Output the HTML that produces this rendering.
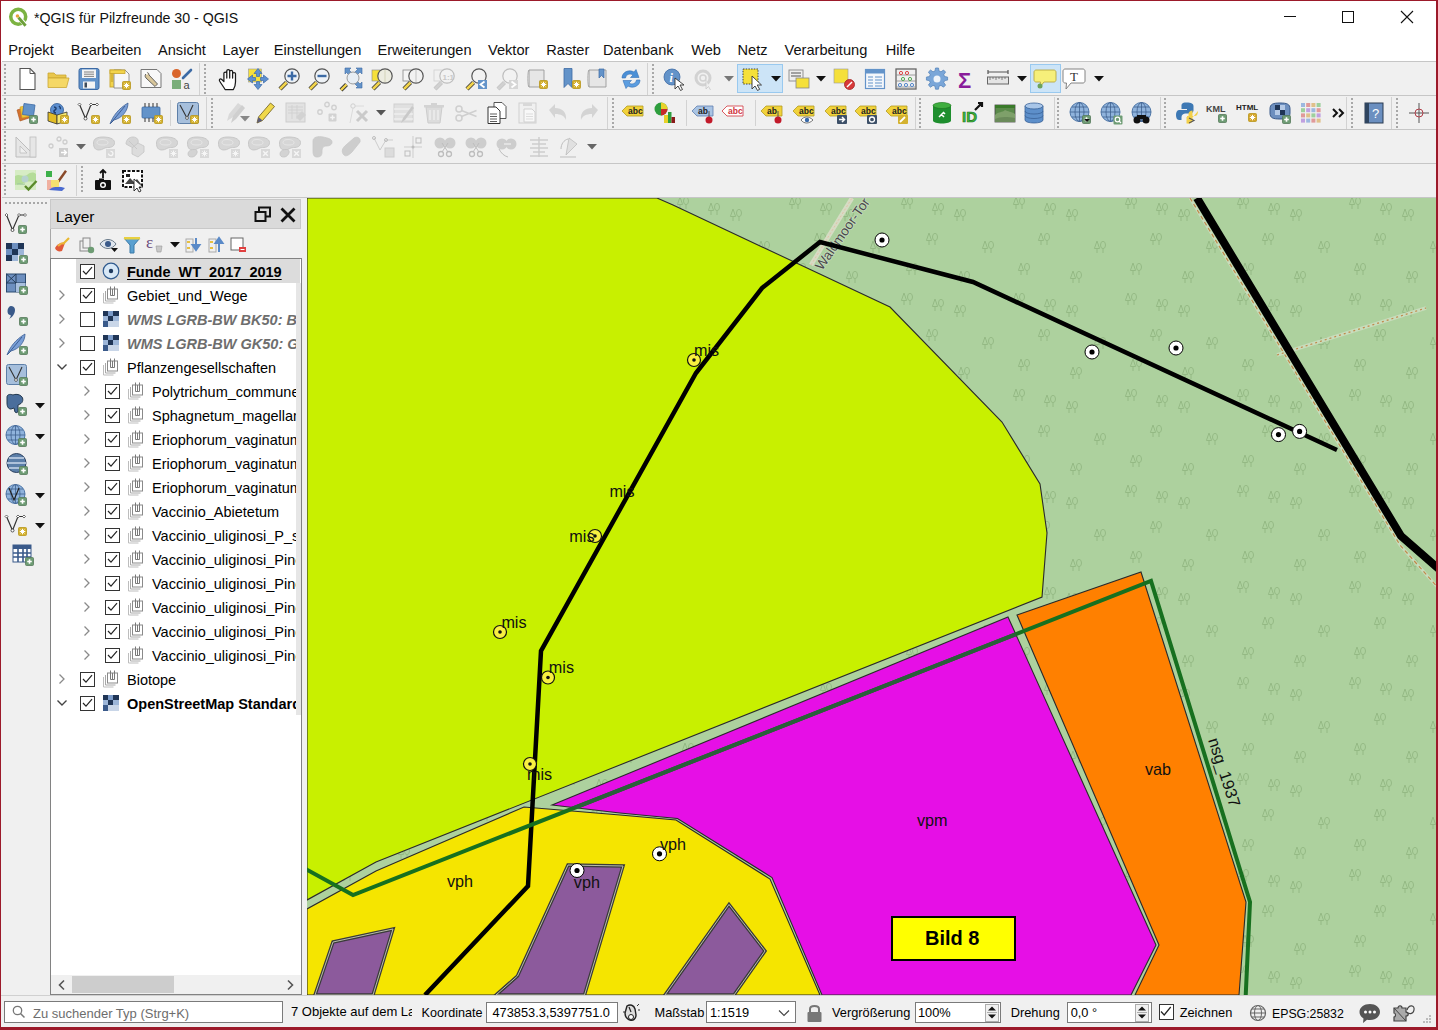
<!DOCTYPE html><html><head><meta charset="utf-8"><style>
*{box-sizing:border-box;margin:0;padding:0}
html,body{width:1438px;height:1030px;overflow:hidden;background:#f0f0f0;font-family:"Liberation Sans",sans-serif;color:#000}
.a{position:absolute}
.t{position:absolute;white-space:pre;line-height:1}
svg{position:absolute;overflow:visible}
.hd{position:absolute;width:2px;background-image:linear-gradient(#a8a8a8 50%,transparent 50%);background-size:2px 4px}
.hh{position:absolute;height:2px;background-image:linear-gradient(90deg,#a8a8a8 50%,transparent 50%);background-size:4px 2px}
.vs{position:absolute;width:1px;background:#d2d2d2}
</style></head><body><div class="a" style="left:0;top:0;width:1438px;height:62px;background:#fff"></div>
<svg style="left:8px;top:7px" width="22" height="21" viewBox="0 0 20 19"><circle cx="9.3" cy="8.8" r="6.8" fill="none" stroke="#7cb342" stroke-width="3.2"/><path d="M8.5,8l8,9" stroke="#fff" stroke-width="4"/><path d="M9.5,9.5l6.5,7.5" stroke="#6d9f3a" stroke-width="2.6"/><circle cx="8.6" cy="8.2" r="1.6" fill="#e8a23a"/></svg>
<div class="t" style="left:34px;top:11.28px;font-size:14.2px;color:#111;font-weight:400;font-style:normal;">*QGIS für Pilzfreunde 30 - QGIS</div>
<div class="a" style="left:1284px;top:16px;width:12px;height:1px;background:#111"></div>
<div class="a" style="left:1342px;top:11px;width:12px;height:12px;border:1px solid #111"></div>
<svg style="left:1401px;top:11px" width="12" height="12" viewBox="0 0 12 12"><path d="M0,0L12,12M12,0L0,12" stroke="#111" stroke-width="1.1"/></svg>
<div class="t" style="left:8.3px;top:43.24px;font-size:14.6px;color:#111;font-weight:400;font-style:normal;">Projekt</div>
<div class="t" style="left:70.8px;top:43.24px;font-size:14.6px;color:#111;font-weight:400;font-style:normal;">Bearbeiten</div>
<div class="t" style="left:158px;top:43.24px;font-size:14.6px;color:#111;font-weight:400;font-style:normal;">Ansicht</div>
<div class="t" style="left:222.5px;top:43.24px;font-size:14.6px;color:#111;font-weight:400;font-style:normal;">Layer</div>
<div class="t" style="left:273.7px;top:43.24px;font-size:14.6px;color:#111;font-weight:400;font-style:normal;">Einstellungen</div>
<div class="t" style="left:377.5px;top:43.24px;font-size:14.6px;color:#111;font-weight:400;font-style:normal;">Erweiterungen</div>
<div class="t" style="left:488px;top:43.24px;font-size:14.6px;color:#111;font-weight:400;font-style:normal;">Vektor</div>
<div class="t" style="left:546.3px;top:43.24px;font-size:14.6px;color:#111;font-weight:400;font-style:normal;">Raster</div>
<div class="t" style="left:603px;top:43.24px;font-size:14.6px;color:#111;font-weight:400;font-style:normal;">Datenbank</div>
<div class="t" style="left:691.2px;top:43.24px;font-size:14.6px;color:#111;font-weight:400;font-style:normal;">Web</div>
<div class="t" style="left:737.5px;top:43.24px;font-size:14.6px;color:#111;font-weight:400;font-style:normal;">Netz</div>
<div class="t" style="left:784.5px;top:43.24px;font-size:14.6px;color:#111;font-weight:400;font-style:normal;">Verarbeitung</div>
<div class="t" style="left:885.8px;top:43.24px;font-size:14.6px;color:#111;font-weight:400;font-style:normal;">Hilfe</div>
<div class="a" style="left:2px;top:61px;width:1434px;height:1px;background:#c6c6c6"></div>
<div class="a" style="left:2px;top:95px;width:1434px;height:1px;background:#c6c6c6"></div>
<div class="a" style="left:2px;top:129px;width:1434px;height:1px;background:#c6c6c6"></div>
<div class="a" style="left:2px;top:163px;width:1434px;height:1px;background:#c6c6c6"></div>
<div class="a" style="left:2px;top:197px;width:1434px;height:1px;background:#c6c6c6"></div>
<div class="hd" style="left:4px;top:64px;height:30px"></div>
<div class="hd" style="left:4px;top:98px;height:30px"></div>
<div class="hd" style="left:4px;top:131px;height:30px"></div>
<div class="hd" style="left:4px;top:165px;height:30px"></div>
<svg style="left:15.0px;top:67.0px" width="24" height="24" viewBox="0 0 24 24"><path d="M5,1.5h10l5,5v16h-15z" fill="#fff" stroke="#555" stroke-width="1.1"/><path d="M15,1.5v5h5" fill="none" stroke="#555" stroke-width="1"/></svg>
<svg style="left:45.7px;top:67.0px" width="24" height="24" viewBox="0 0 24 24"><path d="M2,6h6l2,2h10v3h-18z" fill="#e9c74d" stroke="#c9a633" stroke-width="0.8"/><path d="M2,11h21l-2.5,9.5h-18.5z" fill="#f5d866" stroke="#c9a633" stroke-width="0.8"/></svg>
<svg style="left:77.0px;top:67.0px" width="24" height="24" viewBox="0 0 24 24"><rect x="2" y="1.5" width="20" height="21" rx="2" fill="#6393c9" stroke="#3c6aa5" stroke-width="1"/><rect x="5" y="2.5" width="14" height="8.5" fill="#f4f4f4"/><path d="M7,5h10M7,7.2h10M7,9.4h10" stroke="#505050" stroke-width="0.7"/><rect x="6" y="14.5" width="12" height="7" fill="#f4f4f4"/><rect x="7.5" y="15.5" width="2.5" height="5" fill="#3c4a5a"/></svg>
<svg style="left:108.0px;top:67.0px" width="24" height="24" viewBox="0 0 24 24"><rect x="2" y="3" width="11" height="17" fill="#f2d44c" stroke="#c8a52a" stroke-width="0.9"/><path d="M3,6h2M3,8h2M3,10h2M3,12h2M3,14h2" stroke="#b08a1a" stroke-width="0.8"/><path d="M6,3h11l4,4v14h-15z" fill="#f7f7f7" stroke="#888" stroke-width="0.9"/><rect x="2" y="3" width="15" height="3.5" fill="#f2d44c" stroke="#c8a52a" stroke-width="0.8"/><rect x="14.5" y="14.5" width="8" height="8" rx="1" fill="#d4b22f" stroke="#b8961c" stroke-width="0.8"/><path d="M18.5,15.8v5.5M15.8,18.5h5.5M16.6,16.6l3.8,3.8M20.4,16.6l-3.8,3.8" stroke="#fff" stroke-width="1"/></svg>
<svg style="left:139.0px;top:67.0px" width="24" height="24" viewBox="0 0 24 24"><path d="M2,2.5h16l4,4v14h-20z" fill="#f8f8f8" stroke="#777" stroke-width="1"/><path d="M8,6c-2,1-2.5,3.5-1,5l9,8.5 2.5-2.5-8.5-9c-0.2-2-1-2.5-2-2z" fill="#d9c79b" stroke="#555" stroke-width="0.9"/><path d="M6,5l2.5,2.5" stroke="#fff" stroke-width="1.6"/></svg>
<svg style="left:170.0px;top:67.0px" width="24" height="24" viewBox="0 0 24 24"><circle cx="6.5" cy="6.5" r="4.5" fill="#d9652b"/><path d="M13,11l8,-8" stroke="#3c6aa5" stroke-width="2.6" stroke-linecap="round"/><rect x="2" y="13" width="9" height="9" fill="#7aae7a"/><text x="13.5" y="21.5" font-family="Liberation Sans" font-size="11" fill="#444">a</text></svg>
<div class="vs" style="left:199px;top:63px;height:32px"></div>
<div class="hd" style="left:204px;top:64px;height:30px"></div>
<svg style="left:215.0px;top:67.0px" width="24" height="24" viewBox="0 0 24 24"><g transform="translate(2.6,0)"><path d="M7.5,22.5C6,20 3.5,16.5 2,14C1.2,12.7 2.6,11.2 3.9,12.2L6.3,14.5V6.2C6.3,4.6 9.2,4.6 9.2,6.2V11V3.8C9.2,2.2 12.1,2.2 12.1,3.8V11V4.6C12.1,3 15,3 15,4.6V11V6.8C15,5.2 17.9,5.2 17.9,6.8V15C17.9,18.5 17,20.5 15.8,22.5Z" fill="#fff" stroke="#1a1a1a" stroke-width="1.25" stroke-linejoin="round"/></g></svg>
<svg style="left:246.0px;top:67.0px" width="24" height="24" viewBox="0 0 24 24"><rect x="2.5" y="2" width="13" height="13" fill="#f5e03a" stroke="#999" stroke-width="0.6"/><path d="M12,1.5l4,5h-2.5v3h-3v-3h-2.5z" fill="#5d8fcf" stroke="#3a6aa8" stroke-width="0.7"/><path d="M12,22.5l4-5h-2.5v-3h-3v3h-2.5z" fill="#5d8fcf" stroke="#3a6aa8" stroke-width="0.7"/><path d="M1.5,12l5-4v2.5h3v3h-3v2.5z" fill="#5d8fcf" stroke="#3a6aa8" stroke-width="0.7"/><path d="M22.5,12l-5-4v2.5h-3v3h3v2.5z" fill="#5d8fcf" stroke="#3a6aa8" stroke-width="0.7"/></svg>
<svg style="left:276.5px;top:67.0px" width="24" height="24" viewBox="0 0 24 24"><path d="M3,22 l6.5,-6.5" stroke="#333" stroke-width="4.2"/><path d="M3,22 l6.5,-6.5" stroke="#f2d44c" stroke-width="2.6"/><circle cx="15" cy="9" r="7.2" fill="#eef2f6" stroke="#555" stroke-width="1.2"/><path d="M15,4.5v9M10.5,9h9" stroke="#3c6aa5" stroke-width="2.4"/></svg>
<svg style="left:307.4px;top:67.0px" width="24" height="24" viewBox="0 0 24 24"><path d="M3,22 l6.5,-6.5" stroke="#333" stroke-width="4.2"/><path d="M3,22 l6.5,-6.5" stroke="#f2d44c" stroke-width="2.6"/><circle cx="15" cy="9" r="7.2" fill="#eef2f6" stroke="#555" stroke-width="1.2"/><path d="M10.5,9h9" stroke="#3c6aa5" stroke-width="2.4"/></svg>
<svg style="left:339.0px;top:67.0px" width="24" height="24" viewBox="0 0 24 24"><path d="M6,1h6l-2,2 3,3-2.5,2.5-3-3-1.5,1.5zM23,1v6l-2,-2-3,3-2.5,-2.5 3,-3-1.5,-1.5zM23,21v-6l-2,2-3,-3-2.5,2.5 3,3-1.5,1.5z" fill="#6393c9" stroke="#3c6aa5" stroke-width="0.6"/><circle cx="14" cy="11" r="6" fill="#e8eef4" stroke="#888" stroke-width="0.8"/><path d="M2,23 l5.5,-5.5" stroke="#333" stroke-width="4"/><path d="M2,23 l5.5,-5.5" stroke="#f2d44c" stroke-width="2.4"/></svg>
<svg style="left:370.0px;top:67.0px" width="24" height="24" viewBox="0 0 24 24"><rect x="2" y="3" width="8" height="11" fill="#f5e03a" stroke="#888" stroke-width="0.6"/><path d="M3,22 l6.5,-6.5" stroke="#333" stroke-width="4.2"/><path d="M3,22 l6.5,-6.5" stroke="#f2d44c" stroke-width="2.6"/><circle cx="15" cy="9" r="7.2" fill="#ecece0" stroke="#555" stroke-width="1.2"/><path d="M15,3v12" stroke="#d8d8c0" stroke-width="1.2"/></svg>
<svg style="left:401.0px;top:67.0px" width="24" height="24" viewBox="0 0 24 24"><rect x="2" y="3" width="9" height="11" fill="#f4f4f4" stroke="#888" stroke-width="0.8"/><path d="M3,22 l6.5,-6.5" stroke="#333" stroke-width="4.2"/><path d="M3,22 l6.5,-6.5" stroke="#f2d44c" stroke-width="2.6"/><circle cx="15" cy="9" r="7.2" fill="#f2f2f2" stroke="#555" stroke-width="1.2"/><path d="M15,3v12" stroke="#ccc" stroke-width="1.2"/></svg>
<svg style="left:432.0px;top:67.0px" width="24" height="24" viewBox="0 0 24 24"><rect x="2" y="3" width="9" height="11" fill="#f0f0f0" stroke="#d0d0d0" stroke-width="0.8"/><path d="M3,22 l6.5,-6.5" stroke="#c4c4c4" stroke-width="4.2"/><path d="M3,22 l6.5,-6.5" stroke="#d0d0d0" stroke-width="2.6"/><circle cx="15" cy="9" r="7.2" fill="#f2f2f2" stroke="#bdbdbd" stroke-width="1.2"/><text x="10.5" y="12.5" font-family="Liberation Sans" font-weight="700" font-size="8" fill="#c8c8c8">1:1</text></svg>
<svg style="left:464.0px;top:67.0px" width="24" height="24" viewBox="0 0 24 24"><path d="M3,22 l6.5,-6.5" stroke="#333" stroke-width="4.2"/><path d="M3,22 l6.5,-6.5" stroke="#f2d44c" stroke-width="2.6"/><circle cx="15" cy="9" r="7.2" fill="#f2f2f2" stroke="#555" stroke-width="1.2"/><rect x="14" y="13" width="9" height="9" fill="#6393c9"/><path d="M20.5,14.5l-4,3 4,3" fill="none" stroke="#fff" stroke-width="1.8"/></svg>
<svg style="left:495.0px;top:67.0px" width="24" height="24" viewBox="0 0 24 24"><path d="M3,22 l6.5,-6.5" stroke="#c4c4c4" stroke-width="4.2"/><path d="M3,22 l6.5,-6.5" stroke="#d0d0d0" stroke-width="2.6"/><circle cx="15" cy="9" r="7.2" fill="#f2f2f2" stroke="#bdbdbd" stroke-width="1.2"/><rect x="14" y="13" width="9" height="9" fill="#d6d6d6"/><path d="M16.5,14.5l4,3-4,3" fill="none" stroke="#fff" stroke-width="1.8"/></svg>
<svg style="left:526.0px;top:67.0px" width="24" height="24" viewBox="0 0 24 24"><path d="M3,3h15v17h-15z" fill="#e6e6e6" stroke="#999" stroke-width="0.9"/><path d="M3,3c-1.5,0-1.5,17 0,17" fill="#ddd" stroke="#999" stroke-width="0.8"/><rect x="13.5" y="13.5" width="8" height="8" rx="1" fill="#d2ae2a" stroke="#b8961c" stroke-width="0.8"/><path d="M17.5,14.8v5.5M14.8,17.5h5.5M15.6,15.6l3.8,3.8M19.4,15.6l-3.8,3.8" stroke="#fff" stroke-width="1"/></svg>
<svg style="left:559.0px;top:67.0px" width="24" height="24" viewBox="0 0 24 24"><path d="M5,1.5h8v19l-4,-4-4,4z" fill="#6393c9" stroke="#3c6aa5" stroke-width="0.8"/><rect x="13.5" y="13.5" width="8" height="8" rx="1" fill="#d2ae2a" stroke="#b8961c" stroke-width="0.8"/><path d="M17.5,14.8v5.5M14.8,17.5h5.5M15.6,15.6l3.8,3.8M19.4,15.6l-3.8,3.8" stroke="#fff" stroke-width="1"/></svg>
<svg style="left:586.0px;top:67.0px" width="24" height="24" viewBox="0 0 24 24"><path d="M3,3h17v17h-17z" fill="#e6e6e6" stroke="#999" stroke-width="0.9"/><path d="M3,3c-1.5,0-1.5,17 0,17" fill="#ddd" stroke="#999" stroke-width="0.8"/><path d="M13,2h5v9l-2.5,-2.5-2.5,2.5z" fill="#6393c9" stroke="#3c6aa5" stroke-width="0.7"/></svg>
<svg style="left:618.5px;top:67.0px" width="24" height="24" viewBox="0 0 24 24"><path d="M3,11c0-6 7-9 12-6l2-2.5 3,8h-8.5l2.5-2.5c-3-2-7-0.5-7.5,3z" fill="#4a8fd6" stroke="#3570b5" stroke-width="0.6"/><path d="M21,13c0,6-7,9-12,6l-2,2.5-3-8h8.5l-2.5,2.5c3,2 7,0.5 7.5-3z" fill="#5b9de0" stroke="#3570b5" stroke-width="0.6"/></svg>
<div class="vs" style="left:647px;top:63px;height:32px"></div>
<div class="hd" style="left:652px;top:64px;height:30px"></div>
<div class="a" style="left:737px;top:64px;width:46px;height:29px;background:#cce4f7;border:1px solid #99c9ef"></div>
<div class="a" style="left:1030px;top:64px;width:31px;height:29px;background:#cce4f7;border:1px solid #99c9ef"></div>
<svg style="left:662.0px;top:67.0px" width="24" height="24" viewBox="0 0 24 24"><circle cx="10" cy="10" r="8" fill="#6393c9" stroke="#3c6aa5" stroke-width="0.8"/><text x="7.5" y="15" font-family="Liberation Serif" font-style="italic" font-weight="700" font-size="12" fill="#fff">i</text><path d="M13,11v11l3,-3 2.5,4.5 2,-1-2.5,-4.5h4z" fill="#fff" stroke="#333" stroke-width="0.9"/></svg>
<svg style="left:692.0px;top:67.0px" width="24" height="24" viewBox="0 0 24 24"><circle cx="11" cy="11" r="7" fill="none" stroke="#d2d2d2" stroke-width="3"/><circle cx="11" cy="11" r="3" fill="none" stroke="#d2d2d2" stroke-width="1.5"/><path d="M14,13v9l2.5,-2.5 2,3.5" fill="#eee" stroke="#ccc" stroke-width="0.9"/></svg>
<svg style="left:740.5px;top:67.0px" width="24" height="24" viewBox="0 0 24 24"><rect x="2" y="2" width="15" height="15" fill="#f5e03a" stroke="#333" stroke-width="0.9" stroke-dasharray="1.5,1.2"/><path d="M11,9v13l3,-3 2.5,4.5 2.2,-1.2-2.5,-4.3h4.3z" fill="#fff" stroke="#333" stroke-width="0.9"/></svg>
<svg style="left:787.0px;top:67.0px" width="24" height="24" viewBox="0 0 24 24"><rect x="2" y="3" width="14" height="11" fill="#eee" stroke="#888" stroke-width="0.9"/><path d="M4,6h10M4,9h10" stroke="#888" stroke-width="1.3"/><rect x="9" y="11" width="13" height="10" fill="#f5e03a" stroke="#888" stroke-width="0.8"/></svg>
<svg style="left:832.0px;top:67.0px" width="24" height="24" viewBox="0 0 24 24"><rect x="2" y="2" width="14" height="14" fill="#f5e03a" stroke="#999" stroke-width="0.6"/><circle cx="17.5" cy="17.5" r="5" fill="#d83a3a" stroke="#a02020" stroke-width="0.8"/><path d="M15,20l5,-5" stroke="#fff" stroke-width="1.5"/></svg>
<svg style="left:863.0px;top:67.0px" width="24" height="24" viewBox="0 0 24 24"><rect x="2.5" y="2.5" width="19" height="19" fill="#f4f7fb" stroke="#6393c9" stroke-width="1.2"/><rect x="2.5" y="2.5" width="19" height="4" fill="#6393c9"/><path d="M5,10h5M12,10h7M5,13h5M12,13h7M5,16h5M12,16h7M5,19h5M12,19h7" stroke="#6393c9" stroke-width="1.1"/></svg>
<svg style="left:894.0px;top:67.0px" width="24" height="24" viewBox="0 0 24 24"><rect x="2" y="2" width="20" height="20" fill="none" stroke="#666" stroke-width="1.3"/><path d="M2,8h20M2,14h20M2,20h20" stroke="#888" stroke-width="0.8"/><circle cx="7" cy="6" r="1.6" fill="none" stroke="#d44" stroke-width="1"/><circle cx="13" cy="6" r="1.6" fill="none" stroke="#d44" stroke-width="1"/><circle cx="9" cy="12" r="1.6" fill="none" stroke="#5a5" stroke-width="1"/><circle cx="16" cy="12" r="1.6" fill="none" stroke="#5a5" stroke-width="1"/><circle cx="6" cy="18" r="1.6" fill="none" stroke="#58c" stroke-width="1"/><circle cx="12" cy="18" r="1.6" fill="none" stroke="#58c" stroke-width="1"/><circle cx="18" cy="18" r="1.6" fill="none" stroke="#58c" stroke-width="1"/></svg>
<svg style="left:924.5px;top:67.0px" width="24" height="24" viewBox="0 0 24 24"><path d="M10.5,1h3l0.5,3 2,0.8 2.5-1.8 2.1,2.1-1.8,2.5 0.8,2 3,0.5v3l-3,0.5-0.8,2 1.8,2.5-2.1,2.1-2.5-1.8-2,0.8-0.5,3h-3l-0.5-3-2-0.8-2.5,1.8-2.1-2.1 1.8-2.5-0.8-2-3-0.5v-3l3-0.5 0.8-2-1.8-2.5 2.1-2.1 2.5,1.8 2-0.8z" fill="#7aa6d8" stroke="#4f7fb8" stroke-width="0.7"/><circle cx="12" cy="12" r="3.5" fill="#eef3f9"/></svg>
<svg style="left:955.0px;top:67.0px" width="24" height="24" viewBox="0 0 24 24"><text x="3" y="21" font-family="Liberation Sans" font-weight="700" font-size="22" fill="#8a1c9a">Σ</text></svg>
<svg style="left:986.0px;top:67.0px" width="24" height="24" viewBox="0 0 24 24"><rect x="1.5" y="10" width="21" height="7" fill="#e4e4e4" stroke="#666" stroke-width="1"/><path d="M4,10v3M7,10v2M10,10v3M13,10v2M16,10v3M19,10v2" stroke="#666" stroke-width="0.8"/><path d="M2,5h20M2,3v4M22,3v4" stroke="#555" stroke-width="1.2"/></svg>
<svg style="left:1032.5px;top:67.0px" width="24" height="24" viewBox="0 0 24 24"><path d="M3,3h18c1,0 2,1 2,2v8c0,1-1,2-2,2h-10l-4,5 0.5-5h-4.5c-1,0-2-1-2-2v-8c0-1 1-2 2-2z" fill="#f6ef7a" stroke="#b9a940" stroke-width="0.9"/><circle cx="7" cy="19" r="2.5" fill="#6da25a"/></svg>
<svg style="left:1062.0px;top:67.0px" width="24" height="24" viewBox="0 0 24 24"><path d="M3,2h18c1,0 2,1 2,2v10c0,1-1,2-2,2h-12l-5,6 0.5-6h-1.5c-1,0-2-1-2-2v-10c0-1 1-2 2-2z" fill="#fff" stroke="#777" stroke-width="0.9"/><text x="8" y="14" font-family="Liberation Serif" font-size="13" fill="#333">T</text></svg>
<svg style="left:724px;top:76px" width="10" height="6" viewBox="0 0 10 6"><path d="M0,0h10l-5,5.5z" fill="#777"/></svg>
<svg style="left:770.6px;top:76px" width="10" height="6" viewBox="0 0 10 6"><path d="M0,0h10l-5,5.5z" fill="#111"/></svg>
<svg style="left:816px;top:76px" width="10" height="6" viewBox="0 0 10 6"><path d="M0,0h10l-5,5.5z" fill="#111"/></svg>
<svg style="left:1017px;top:76px" width="10" height="6" viewBox="0 0 10 6"><path d="M0,0h10l-5,5.5z" fill="#111"/></svg>
<svg style="left:1094px;top:76px" width="10" height="6" viewBox="0 0 10 6"><path d="M0,0h10l-5,5.5z" fill="#111"/></svg>
<svg style="left:15.0px;top:101.0px" width="24" height="24" viewBox="0 0 24 24"><path d="M2,9l9-3 3,11-9,3z" fill="#d4712e" stroke="#a8521c" stroke-width="0.6"/><path d="M5,6l9-2 2,11-9,2z" fill="#f0c43a" stroke="#c99a1c" stroke-width="0.6"/><path d="M9,2.5l11,1.5-1.5,11-11-1.5z" fill="#6393c9" stroke="#3c6aa5" stroke-width="0.8"/><rect x="14.5" y="14.5" width="8" height="8" rx="1" fill="#6e9c74" stroke="#557a5a" stroke-width="0.8"/><path d="M18.5,16.2v4.6M16.2,18.5h4.6" stroke="#fff" stroke-width="1.6"/></svg>
<svg style="left:46.0px;top:101.0px" width="24" height="24" viewBox="0 0 24 24"><circle cx="11" cy="9" r="6.5" fill="#5d8fd0" stroke="#2f5a94" stroke-width="0.8"/><path d="M8,6c2,0 3,2 1,3s-1,3 1,3M13,5c1,1 2,2 1,3" fill="none" stroke="#1f3f6f" stroke-width="1.5"/><path d="M2,11l9,3v9l-9-3z" fill="#e2bc24" stroke="#333" stroke-width="0.8"/><path d="M11,14l10-3v9l-10,3z" fill="#f5e770" stroke="#333" stroke-width="0.8"/><rect x="14.5" y="14.5" width="8" height="8" rx="1" fill="#d4b22f" stroke="#b8961c" stroke-width="0.8"/><path d="M18.5,15.8v5.5M15.8,18.5h5.5M16.6,16.6l3.8,3.8M20.4,16.6l-3.8,3.8" stroke="#fff" stroke-width="1"/></svg>
<svg style="left:77.0px;top:101.0px" width="24" height="24" viewBox="0 0 24 24"><path d="M2.5,3.5l6,14 5.5,-14 6,0" fill="none" stroke="#333" stroke-width="1.2"/><path d="M1,3.5l1.5,-1.5 1.5,1.5-1.5,1.5zM12.5,3.5l1.5,-1.5 1.5,1.5-1.5,1.5zM18.5,3.5l1.5,-1.5 1.5,1.5-1.5,1.5z" fill="#fff" stroke="#333" stroke-width="0.7"/><circle cx="8.5" cy="17.5" r="1.5" fill="#fff" stroke="#333" stroke-width="0.8"/><rect x="14.5" y="14.5" width="8" height="8" rx="1" fill="#d4b22f" stroke="#b8961c" stroke-width="0.8"/><path d="M18.5,15.8v5.5M15.8,18.5h5.5M16.6,16.6l3.8,3.8M20.4,16.6l-3.8,3.8" stroke="#fff" stroke-width="1"/></svg>
<svg style="left:108.0px;top:101.0px" width="24" height="24" viewBox="0 0 24 24"><path d="M2,23c3-8 8-15 18-21 0,8-6,15-14,17z" fill="#7a9fd6" stroke="#3e5f95" stroke-width="0.8"/><path d="M3,22l14-17" stroke="#2e4f85" stroke-width="0.8"/><rect x="14.5" y="14.5" width="8" height="8" rx="1" fill="#d4b22f" stroke="#b8961c" stroke-width="0.8"/><path d="M18.5,15.8v5.5M15.8,18.5h5.5M16.6,16.6l3.8,3.8M20.4,16.6l-3.8,3.8" stroke="#fff" stroke-width="1"/></svg>
<svg style="left:140.0px;top:101.0px" width="24" height="24" viewBox="0 0 24 24"><rect x="2" y="6" width="18" height="11" rx="1" fill="#6393c9" stroke="#3c6aa5" stroke-width="0.8"/><path d="M5,2v4M9,2v4M13,2v4M17,2v4M5,17v4M9,17v4M13,17v4" stroke="#333" stroke-width="1"/><rect x="14.5" y="14.5" width="8" height="8" rx="1" fill="#d4b22f" stroke="#b8961c" stroke-width="0.8"/><path d="M18.5,15.8v5.5M15.8,18.5h5.5M16.6,16.6l3.8,3.8M20.4,16.6l-3.8,3.8" stroke="#fff" stroke-width="1"/></svg>
<svg style="left:176.0px;top:101.0px" width="24" height="24" viewBox="0 0 24 24"><rect x="1.5" y="1.5" width="21" height="21" rx="2" fill="#a6bfdc" stroke="#5d7fa8" stroke-width="1"/><path d="M4,4l7,13 6,-13" fill="none" stroke="#333" stroke-width="1.1"/><circle cx="11" cy="17" r="1.4" fill="#fff" stroke="#333" stroke-width="0.7"/><rect x="14.5" y="14.5" width="8" height="8" rx="1" fill="#d4b22f" stroke="#b8961c" stroke-width="0.8"/><path d="M18.5,15.8v5.5M15.8,18.5h5.5M16.6,16.6l3.8,3.8M20.4,16.6l-3.8,3.8" stroke="#fff" stroke-width="1"/></svg>
<div class="vs" style="left:170.4px;top:100px;height:26px"></div>
<div class="vs" style="left:206.3px;top:97px;height:32px"></div>
<div class="hd" style="left:210.8px;top:98px;height:30px"></div>
<svg style="left:223.0px;top:101.0px" width="24" height="24" viewBox="0 0 24 24"><path d="M4,20l2-7 9-11 4,3-9,11z" fill="#d9d9d9"/><path d="M8,22l2-7 9-11 3,3-9,11z" fill="#cfcfcf"/></svg>
<svg style="left:252.6px;top:101.0px" width="24" height="24" viewBox="0 0 24 24"><path d="M4,22l1.5-6 12-14 4,3.5-12,14z" fill="#f0d84a" stroke="#7a6a2a" stroke-width="0.9"/><path d="M4,22l1.5-6 4,3.5z" fill="#5c5c7a"/></svg>
<svg style="left:283.6px;top:101.0px" width="24" height="24" viewBox="0 0 24 24"><rect x="2" y="2" width="19" height="19" fill="#e2e2e2" stroke="#cdcdcd" stroke-width="1"/><path d="M4,6h15M4,9h15M4,12h15M8,4v14M13,4v14" stroke="#cfcfcf" stroke-width="0.8"/><path d="M12,16l6-6 4,4-6,6z" fill="#d2d2d2"/></svg>
<svg style="left:315.5px;top:101.0px" width="24" height="24" viewBox="0 0 24 24"><circle cx="11" cy="3.5" r="2.2" fill="none" stroke="#d0d0d0" stroke-width="1.4"/><circle cx="18" cy="6.5" r="2.2" fill="none" stroke="#d0d0d0" stroke-width="1.4"/><circle cx="4" cy="11" r="2.2" fill="none" stroke="#d0d0d0" stroke-width="1.4"/><rect x="12.5" y="12.5" width="8" height="8" rx="1" fill="#d2d2d2"/><path d="M16.5,14.2v4.6M14.2,16.5h4.6" stroke="#f4f4f4" stroke-width="1.4"/></svg>
<svg style="left:346.5px;top:101.0px" width="24" height="24" viewBox="0 0 24 24"><circle cx="6" cy="5" r="2.2" fill="none" stroke="#cfcfcf" stroke-width="1"/><path d="M8,5h9M6,7l-3,15" stroke="#d8d8d8" stroke-width="0.9"/><path d="M10,10l10,10M20,10l-10,10" stroke="#cacaca" stroke-width="3"/></svg>
<svg style="left:392.0px;top:101.0px" width="24" height="24" viewBox="0 0 24 24"><rect x="2" y="3" width="19" height="18" fill="#e0e0e0" stroke="#cfcfcf"/><path d="M2,8h19M2,13h19M2,18h19" stroke="#f6f6f6" stroke-width="1.2"/><path d="M9,22l2-5 9-12 2,2-9,12z" fill="#c9c9c9"/></svg>
<svg style="left:421.6px;top:101.0px" width="24" height="24" viewBox="0 0 24 24"><path d="M4,6h16l-2,16h-12z" fill="#dcdcdc" stroke="#cccccc"/><path d="M2,4h20v2.5h-20zM9,2h6v2h-6z" fill="#d3d3d3"/><path d="M8,9v10M12,9v10M16,9v10" stroke="#eeeeee" stroke-width="1.4"/></svg>
<svg style="left:453.8px;top:101.0px" width="24" height="24" viewBox="0 0 24 24"><circle cx="5" cy="8" r="3" fill="none" stroke="#cfcfcf" stroke-width="1.5"/><circle cx="5" cy="17" r="3" fill="none" stroke="#cfcfcf" stroke-width="1.5"/><path d="M7.5,9.5l15,6M7.5,15.5l15-6" stroke="#cfcfcf" stroke-width="1.5"/></svg>
<svg style="left:484.7px;top:101.0px" width="24" height="24" viewBox="0 0 24 24"><path d="M9,1.5h8l4,4v12h-12z" fill="#fff" stroke="#444" stroke-width="0.9"/><path d="M3,6h8l4,4v12.5h-12z" fill="#fff" stroke="#333" stroke-width="1"/><path d="M5,13h7M5,15.5h7M5,18h7M5,20.5h7" stroke="#333" stroke-width="0.8"/></svg>
<svg style="left:515.6px;top:101.0px" width="24" height="24" viewBox="0 0 24 24"><rect x="3" y="2" width="17" height="20" fill="#f0f0f0" stroke="#cfcfcf"/><path d="M7,2h9v3h-9z" fill="#d8d8d8"/><path d="M8,8h8l3,3v10h-11z" fill="#f8f8f8" stroke="#d0d0d0"/><path d="M10,13h7M10,15.5h7M10,18h7" stroke="#d4d4d4" stroke-width="0.8"/></svg>
<svg style="left:546.4px;top:101.0px" width="24" height="24" viewBox="0 0 24 24"><path d="M3,9l6-6v4c7,0 12,4 11,12-1.5-4-5-6-11-6v4z" fill="#d4d4d4"/></svg>
<svg style="left:577.3px;top:101.0px" width="24" height="24" viewBox="0 0 24 24"><path d="M21,9l-6-6v4c-7,0-12,4-11,12 1.5-4 5-6 11-6v4z" fill="#d4d4d4"/></svg>
<svg style="left:240px;top:116px" width="10" height="6" viewBox="0 0 10 6"><path d="M0,0h10l-5,5.5z" fill="#888"/></svg>
<svg style="left:376px;top:110px" width="10" height="6" viewBox="0 0 10 6"><path d="M0,0h10l-5,5.5z" fill="#555"/></svg>
<div class="vs" style="left:607.3px;top:97px;height:32px"></div>
<div class="hd" style="left:611.5px;top:98px;height:30px"></div>
<svg style="left:621.0px;top:101.0px" width="24" height="24" viewBox="0 0 24 24"><path d="M6,5h16v10h-16l-5-5z" fill="#f1d23a" stroke="#b39a22" stroke-width="0.8"/><text x="7" y="13.3" font-family="Liberation Sans" font-weight="700" font-size="8.5" fill="#222">abc</text></svg>
<svg style="left:653.0px;top:101.0px" width="24" height="24" viewBox="0 0 24 24"><circle cx="8" cy="8" r="6.5" fill="#2e9e3e"/><path d="M8,8v-6.5a6.5,6.5 0 0 1 6.5,6.5z" fill="#e8d22a"/><path d="M8,8h6.5a6.5,6.5 0 0 1-6.5,6.5z" fill="#c72a2a"/><rect x="11" y="14" width="4" height="8" fill="#e8d22a"/><rect x="15" y="11" width="3.5" height="11" fill="#2e9e3e"/><rect x="18.5" y="16" width="3.5" height="6" fill="#8a1a1a"/></svg>
<svg style="left:690.5px;top:101.0px" width="24" height="24" viewBox="0 0 24 24"><path d="M6,5h16v10h-16l-5-5z" fill="#a9c4e4" stroke="#5f7fae" stroke-width="0.8"/><text x="7" y="13.3" font-family="Liberation Sans" font-weight="700" font-size="8.5" fill="#222">ab</text><path d="M18,10v6" stroke="#555" stroke-width="1"/><circle cx="18" cy="19" r="3.5" fill="#c21a2a"/></svg>
<svg style="left:721.0px;top:101.0px" width="24" height="24" viewBox="0 0 24 24"><path d="M6,5h16v10h-16l-5-5z" fill="#ffffff" stroke="#d0323a" stroke-width="0.8"/><text x="7" y="13.3" font-family="Liberation Sans" font-weight="700" font-size="8.5" fill="#d0323a">abc</text></svg>
<svg style="left:760.0px;top:101.0px" width="24" height="24" viewBox="0 0 24 24"><path d="M6,5h16v10h-16l-5-5z" fill="#f1d23a" stroke="#b39a22" stroke-width="0.8"/><text x="7" y="13.3" font-family="Liberation Sans" font-weight="700" font-size="8.5" fill="#222">ab</text><path d="M18,10v6" stroke="#555" stroke-width="1"/><circle cx="18" cy="19" r="3.5" fill="#c21a2a"/></svg>
<svg style="left:792.0px;top:101.0px" width="24" height="24" viewBox="0 0 24 24"><path d="M6,5h16v10h-16l-5-5z" fill="#f1d23a" stroke="#b39a22" stroke-width="0.8"/><text x="7" y="13.3" font-family="Liberation Sans" font-weight="700" font-size="8.5" fill="#222">abc</text><path d="M9,19c3-4 8-4 12,0-4,4-9,4-12,0z" fill="#fff" stroke="#555" stroke-width="0.8"/><circle cx="15" cy="19" r="2.2" fill="#3a6aa8"/></svg>
<svg style="left:824.0px;top:101.0px" width="24" height="24" viewBox="0 0 24 24"><path d="M6,5h16v10h-16l-5-5z" fill="#f1d23a" stroke="#b39a22" stroke-width="0.8"/><text x="7" y="13.3" font-family="Liberation Sans" font-weight="700" font-size="8.5" fill="#222">abc</text><rect x="13" y="14" width="10" height="9" rx="1" fill="#3d5068"/><path d="M15,18.5h5M18,16l2.5,2.5-2.5,2.5" fill="none" stroke="#fff" stroke-width="1.5"/></svg>
<svg style="left:854.0px;top:101.0px" width="24" height="24" viewBox="0 0 24 24"><path d="M6,5h16v10h-16l-5-5z" fill="#f1d23a" stroke="#b39a22" stroke-width="0.8"/><text x="7" y="13.3" font-family="Liberation Sans" font-weight="700" font-size="8.5" fill="#222">abc</text><rect x="13" y="14" width="10" height="9" rx="1" fill="#3d5068"/><circle cx="18" cy="18.5" r="2.5" fill="none" stroke="#fff" stroke-width="1.3"/></svg>
<svg style="left:885.0px;top:101.0px" width="24" height="24" viewBox="0 0 24 24"><path d="M6,5h16v10h-16l-5-5z" fill="#f1d23a" stroke="#b39a22" stroke-width="0.8"/><text x="7" y="13.3" font-family="Liberation Sans" font-weight="700" font-size="8.5" fill="#222">abc</text><rect x="13" y="14" width="10" height="9" rx="1" fill="#d4b22f"/><path d="M15,21l5-5" stroke="#fff" stroke-width="1.8"/></svg>
<div class="vs" style="left:686px;top:100px;height:26px"></div>
<div class="vs" style="left:755px;top:100px;height:26px"></div>
<div class="vs" style="left:914.6px;top:97px;height:32px"></div>
<div class="hd" style="left:918.7px;top:98px;height:30px"></div>
<svg style="left:929.6px;top:101.0px" width="24" height="24" viewBox="0 0 24 24"><ellipse cx="12" cy="4.5" rx="9" ry="3" fill="#4ab84a"/><path d="M3,4.5v15c0,4 18,4 18,0v-15" fill="#1e8e2e"/><ellipse cx="12" cy="4.5" rx="9" ry="3" fill="#3fae3f" stroke="#1a6a1a" stroke-width="0.5"/><path d="M9,16l4-4M11,13l3,3M13,11l2,2" stroke="#fff" stroke-width="1.5"/></svg>
<svg style="left:960.5px;top:101.0px" width="24" height="24" viewBox="0 0 24 24"><text x="1" y="21" font-family="Liberation Sans" font-weight="700" font-size="15" fill="#3cb83c" stroke="#1e6e1e" stroke-width="0.6">ID</text><path d="M14,9l7-7M17,2h4v4" stroke="#111" stroke-width="2.2"/></svg>
<svg style="left:992.6px;top:101.0px" width="24" height="24" viewBox="0 0 24 24"><rect x="2" y="4" width="20" height="17" fill="#5a8a4a" stroke="#444" stroke-width="0.8"/><rect x="2" y="4" width="20" height="3" fill="#3a7a2a"/><path d="M2,14c4-4 7-2 10-5 3,2 6,1 10,4v8h-20z" fill="#7ea06a"/><path d="M2,18c4-2 10-3 20-1v4h-20z" fill="#6a8a5a"/></svg>
<svg style="left:1022.0px;top:101.0px" width="24" height="24" viewBox="0 0 24 24"><path d="M3,5v14c0,4 18,4 18,0v-14" fill="#5d8fca" stroke="#3a6298" stroke-width="0.8"/><ellipse cx="12" cy="5" rx="9" ry="3" fill="#a9c6e8" stroke="#3a6298" stroke-width="0.8"/><path d="M3,10c0,4 18,4 18,0M3,14.5c0,4 18,4 18,0" fill="none" stroke="#3a6298" stroke-width="0.8"/></svg>
<div class="vs" style="left:1053.5px;top:97px;height:32px"></div>
<div class="hd" style="left:1057px;top:98px;height:30px"></div>
<svg style="left:1068.0px;top:101.0px" width="24" height="24" viewBox="0 0 24 24"><circle cx="11.5" cy="11" r="9.5" fill="#8fb3dc" stroke="#4f77a8" stroke-width="1"/><path d="M2,11h19M11.5,1.5v19M4,6h15M4,16h15" stroke="#3d5f8e" stroke-width="0.8"/><ellipse cx="11.5" cy="11" rx="4.5" ry="9.5" fill="none" stroke="#3d5f8e" stroke-width="0.8"/><rect x="14.5" y="14.5" width="8" height="8" rx="1" fill="#6e9c74" stroke="#557a5a" stroke-width="0.8"/><path d="M18.5,16.2v4.6M16.2,18.5h4.6" stroke="#fff" stroke-width="1.6"/><path d="M16,18h6l-3,3z" fill="#111"/></svg>
<svg style="left:1099.0px;top:101.0px" width="24" height="24" viewBox="0 0 24 24"><circle cx="11.5" cy="11" r="9.5" fill="#8fb3dc" stroke="#4f77a8" stroke-width="1"/><path d="M2,11h19M11.5,1.5v19M4,6h15M4,16h15" stroke="#3d5f8e" stroke-width="0.8"/><ellipse cx="11.5" cy="11" rx="4.5" ry="9.5" fill="none" stroke="#3d5f8e" stroke-width="0.8"/><rect x="14.5" y="14.5" width="9" height="9" rx="1" fill="#6e9c74"/><circle cx="18.5" cy="18.5" r="2.3" fill="none" stroke="#fff" stroke-width="1.2"/><path d="M20,20l2,2" stroke="#fff" stroke-width="1.3"/></svg>
<svg style="left:1130.0px;top:101.0px" width="24" height="24" viewBox="0 0 24 24"><circle cx="11.5" cy="11" r="9.5" fill="#8fb3dc" stroke="#4f77a8" stroke-width="1"/><path d="M2,11h19M11.5,1.5v19M4,6h15M4,16h15" stroke="#3d5f8e" stroke-width="0.8"/><ellipse cx="11.5" cy="11" rx="4.5" ry="9.5" fill="none" stroke="#3d5f8e" stroke-width="0.8"/><circle cx="7" cy="19" r="3.5" fill="#111"/><circle cx="16" cy="19" r="3.5" fill="#111"/><rect x="7" y="14" width="9" height="4" fill="#111"/></svg>
<div class="vs" style="left:1160px;top:97px;height:32px"></div>
<div class="hd" style="left:1164px;top:98px;height:30px"></div>
<svg style="left:1175.0px;top:101.0px" width="24" height="24" viewBox="0 0 24 24"><path d="M11.5,1.5c-5,0-5,2-5,4v2.5h5.5v1h-7.5c-2.5,0-3.5,2-3.5,5s1,5 3.5,5h2v-3c0-2 2-3.5 4-3.5h5c1.5,0 3-1.5 3-3v-4.5c0-2-2-3.5-7-3.5z" fill="#3d78b4"/><path d="M12.5,22.5c5,0 5-2 5-4v-2.5h-5.5v-1h7.5c2.5,0 3.5-2 3.5-5" fill="#f3d04a"/><path d="M17.5,9.5c-2,0-4,1.5-4,3.5v3h-2v6.5c5,0 6-2 6-4z" fill="#f3d04a"/><path d="M14,17l5,2.5-5,2.5" fill="none" stroke="#555" stroke-width="1.1"/></svg>
<svg style="left:1206.0px;top:101.0px" width="24" height="24" viewBox="0 0 24 24"><text x="0" y="11" font-family="Liberation Sans" font-weight="700" font-size="9" fill="#444">KML</text><rect x="12.5" y="13.5" width="8" height="8" rx="1" fill="#6e9c74" stroke="#557a5a" stroke-width="0.8"/><path d="M16.5,15.2v4.6M14.2,17.5h4.6" stroke="#fff" stroke-width="1.6"/></svg>
<svg style="left:1237.0px;top:101.0px" width="24" height="24" viewBox="0 0 24 24"><text x="-1" y="9" font-family="Liberation Sans" font-weight="700" font-size="8" fill="#222">HTML</text><rect x="11.5" y="12.5" width="8" height="8" rx="1" fill="#d4a52a" stroke="#b8961c" stroke-width="0.8"/><path d="M15.5,13.8v5.5M12.8,16.5h5.5M13.6,14.6l3.8,3.8M17.4,14.6l-3.8,3.8" stroke="#fff" stroke-width="1"/></svg>
<svg style="left:1268.0px;top:101.0px" width="24" height="24" viewBox="0 0 24 24"><path d="M2,8c0-5 3-6 10-6s10,1 10,6v4c0,5-3,6-10,6s-10-1-10-6z" fill="#6d8fbf" stroke="#3a5a8a" stroke-width="1"/><rect x="7" y="4" width="5" height="5" fill="#1f3556"/><rect x="12" y="9" width="5" height="5" fill="#1f3556"/><rect x="12" y="4" width="5" height="5" fill="#b4c9e6"/><rect x="7" y="9" width="5" height="5" fill="#b4c9e6"/><rect x="14.5" y="14.5" width="8" height="8" rx="1" fill="#6e9c74" stroke="#557a5a" stroke-width="0.8"/><path d="M18.5,16.2v4.6M16.2,18.5h4.6" stroke="#fff" stroke-width="1.6"/></svg>
<svg style="left:1299.0px;top:101.0px" width="24" height="24" viewBox="0 0 24 24"><rect x="2.0" y="2.0" width="4" height="4" fill="#9db8e0"/><rect x="7.2" y="2.0" width="4" height="4" fill="#e09a9a"/><rect x="12.4" y="2.0" width="4" height="4" fill="#e0c08a"/><rect x="17.6" y="2.0" width="4" height="4" fill="#9dd09d"/><rect x="2.0" y="7.2" width="4" height="4" fill="#9dd09d"/><rect x="7.2" y="7.2" width="4" height="4" fill="#c0a0e0"/><rect x="12.4" y="7.2" width="4" height="4" fill="#9db8e0"/><rect x="17.6" y="7.2" width="4" height="4" fill="#e09a9a"/><rect x="2.0" y="12.4" width="4" height="4" fill="#e09a9a"/><rect x="7.2" y="12.4" width="4" height="4" fill="#e0c08a"/><rect x="12.4" y="12.4" width="4" height="4" fill="#9dd09d"/><rect x="17.6" y="12.4" width="4" height="4" fill="#c0a0e0"/><rect x="2.0" y="17.6" width="4" height="4" fill="#c0a0e0"/><rect x="7.2" y="17.6" width="4" height="4" fill="#9db8e0"/><rect x="12.4" y="17.6" width="4" height="4" fill="#e09a9a"/><rect x="17.6" y="17.6" width="4" height="4" fill="#e0c08a"/></svg>
<svg style="left:1326.0px;top:101.0px" width="24" height="24" viewBox="0 0 24 24"><path d="M7,8l4,4-4,4M13,8l4,4-4,4" fill="none" stroke="#111" stroke-width="2"/></svg>
<div class="vs" style="left:1346.4px;top:97px;height:32px"></div>
<div class="hd" style="left:1350.8px;top:98px;height:30px"></div>
<svg style="left:1362.0px;top:101.0px" width="24" height="24" viewBox="0 0 24 24"><rect x="3" y="2" width="18" height="20" fill="#6b8fc0" stroke="#2a3a50" stroke-width="1"/><rect x="3" y="2" width="4" height="20" fill="#2f4560"/><text x="10" y="17" font-family="Liberation Sans" font-size="13" fill="#fff">?</text></svg>
<div class="vs" style="left:1391.2px;top:97px;height:32px"></div>
<div class="hd" style="left:1395.7px;top:98px;height:30px"></div>
<svg style="left:1407.0px;top:101.0px" width="24" height="24" viewBox="0 0 24 24"><path d="M12,2v20M2,12h20" stroke="#555" stroke-width="1"/><circle cx="12" cy="12" r="4" fill="none" stroke="#b0404a" stroke-width="1"/></svg>
<svg style="left:14.3px;top:135.0px" width="24" height="24" viewBox="0 0 24 24"><path d="M2,2v20h20z" fill="#e6e6e6" stroke="#bdbdbd" stroke-width="1"/><path d="M6,11v7h7z" fill="#f0f0f0" stroke="#bdbdbd" stroke-width="0.8"/><rect x="16" y="2" width="6" height="20" fill="#e6e6e6" stroke="#bdbdbd" stroke-width="0.8"/></svg>
<svg style="left:46.8px;top:135.0px" width="24" height="24" viewBox="0 0 24 24"><circle cx="12" cy="4" r="2" fill="none" stroke="#cdcdcd" stroke-width="1.3"/><circle cx="18" cy="7" r="2" fill="none" stroke="#cdcdcd" stroke-width="1.3"/><circle cx="4" cy="11" r="2" fill="none" stroke="#cdcdcd" stroke-width="1.3"/><rect x="12" y="13" width="9" height="9" fill="#cdcdcd"/><path d="M14,17.5h5M17,15l2.5,2.5-2.5,2.5" fill="none" stroke="#fff" stroke-width="1.3"/></svg>
<svg style="left:92.0px;top:135.0px" width="24" height="24" viewBox="0 0 24 24"><path d="M1.5,8c0-4.5 4-6 9.5-6s11.5,1.5 11.5,5.5-3,5-7,5-4.5,2.5-8.5,2.5-5.5-2.5-5.5-7z" fill="#d6d6d6" stroke="#c4c4c4" stroke-width="0.9"/><path d="M5,7.5c0-2 2-3 5-3s6,1 6,3-2,2.5-5,2.5-6-0.5-6-2.5z" fill="none" stroke="#e6e6e6" stroke-width="0.9"/><rect x="14" y="14" width="9" height="9" fill="#d9d9d9"/><path d="M16.5,18.5a2.2,2.2 0 1 0 2,-2.2" fill="none" stroke="#f6f6f6" stroke-width="1.3"/></svg>
<svg style="left:123.0px;top:135.0px" width="24" height="24" viewBox="0 0 24 24"><path d="M3,9c0-4 3-7 7-7s6,3 5,6l-5,5z" fill="#d6d6d6" stroke="#c4c4c4" stroke-width="0.8"/><path d="M9,13l6-5 6,3v6l-6,5-6-3z" fill="#dcdcdc" stroke="#c4c4c4" stroke-width="0.8"/><path d="M6,6l8,8" stroke="#c8c8c8" stroke-width="1"/></svg>
<svg style="left:154.5px;top:135.0px" width="24" height="24" viewBox="0 0 24 24"><path d="M1.5,8c0-4.5 4-6 9.5-6s11.5,1.5 11.5,5.5-3,5-7,5-4.5,2.5-8.5,2.5-5.5-2.5-5.5-7z" fill="#d6d6d6" stroke="#c4c4c4" stroke-width="0.9"/><path d="M5,7.5c0-2 2-3 5-3s6,1 6,3-2,2.5-5,2.5-6-0.5-6-2.5z" fill="none" stroke="#e6e6e6" stroke-width="0.9"/><rect x="14" y="14" width="9" height="9" fill="#d9d9d9"/><path d="M18.5,15.5v6M15.5,18.5h6M16.3,16.3l4.4,4.4M20.7,16.3l-4.4,4.4" stroke="#f6f6f6" stroke-width="1"/></svg>
<svg style="left:185.8px;top:135.0px" width="24" height="24" viewBox="0 0 24 24"><path d="M1.5,8c0-4.5 4-6 9.5-6s11.5,1.5 11.5,5.5-3,5-7,5-4.5,2.5-8.5,2.5-5.5-2.5-5.5-7z" fill="#d6d6d6" stroke="#c4c4c4" stroke-width="0.9"/><path d="M5,7.5c0-2 2-3 5-3s6,1 6,3-2,2.5-5,2.5-6-0.5-6-2.5z" fill="none" stroke="#e6e6e6" stroke-width="0.9"/><path d="M2,19c0-3 3-4.5 6-4.5s4,2 2.5,4.5-3,3-5,3-3.5-1-3.5-3z" fill="#d3d3d3" stroke="#c4c4c4" stroke-width="0.8"/><rect x="14" y="14" width="9" height="9" fill="#d9d9d9"/><path d="M18.5,15.5v6M15.5,18.5h6M16.3,16.3l4.4,4.4M20.7,16.3l-4.4,4.4" stroke="#f6f6f6" stroke-width="1"/></svg>
<svg style="left:217.0px;top:135.0px" width="24" height="24" viewBox="0 0 24 24"><path d="M1.5,8c0-4.5 4-6 9.5-6s11.5,1.5 11.5,5.5-3,5-7,5-4.5,2.5-8.5,2.5-5.5-2.5-5.5-7z" fill="#d6d6d6" stroke="#c4c4c4" stroke-width="0.9"/><path d="M5,7.5c0-2 2-3 5-3s6,1 6,3-2,2.5-5,2.5-6-0.5-6-2.5z" fill="none" stroke="#e6e6e6" stroke-width="0.9"/><rect x="14" y="14" width="9" height="9" fill="#d9d9d9"/><path d="M18.5,15.5v6M15.5,18.5h6M16.3,16.3l4.4,4.4M20.7,16.3l-4.4,4.4" stroke="#f6f6f6" stroke-width="1"/></svg>
<svg style="left:247.0px;top:135.0px" width="24" height="24" viewBox="0 0 24 24"><path d="M1.5,8c0-4.5 4-6 9.5-6s11.5,1.5 11.5,5.5-3,5-7,5-4.5,2.5-8.5,2.5-5.5-2.5-5.5-7z" fill="#d6d6d6" stroke="#c4c4c4" stroke-width="0.9"/><path d="M5,7.5c0-2 2-3 5-3s6,1 6,3-2,2.5-5,2.5-6-0.5-6-2.5z" fill="none" stroke="#e6e6e6" stroke-width="0.9"/><rect x="14" y="14" width="9" height="9" fill="#d9d9d9"/><path d="M16.2,16.2l4.6,4.6M20.8,16.2l-4.6,4.6" stroke="#f6f6f6" stroke-width="1.4"/></svg>
<svg style="left:278.4px;top:135.0px" width="24" height="24" viewBox="0 0 24 24"><path d="M1.5,8c0-4.5 4-6 9.5-6s11.5,1.5 11.5,5.5-3,5-7,5-4.5,2.5-8.5,2.5-5.5-2.5-5.5-7z" fill="#d6d6d6" stroke="#c4c4c4" stroke-width="0.9"/><path d="M5,7.5c0-2 2-3 5-3s6,1 6,3-2,2.5-5,2.5-6-0.5-6-2.5z" fill="none" stroke="#e6e6e6" stroke-width="0.9"/><path d="M2,19c0-3 3-4.5 6-4.5s4,2 2.5,4.5-3,3-5,3-3.5-1-3.5-3z" fill="#d3d3d3" stroke="#c4c4c4" stroke-width="0.8"/><rect x="14" y="14" width="9" height="9" fill="#d9d9d9"/><path d="M16.2,16.2l4.6,4.6M20.8,16.2l-4.6,4.6" stroke="#f6f6f6" stroke-width="1.4"/></svg>
<svg style="left:309.7px;top:135.0px" width="24" height="24" viewBox="0 0 24 24"><path d="M3,6c0-4 5-5 10-4s9,2 9,5-3,4-6,4-4,2-4,6-2,5-5,5-4-2-4-6z" fill="#cdcdcd" stroke="#c8c8c8" stroke-width="0.8"/></svg>
<svg style="left:338.5px;top:135.0px" width="24" height="24" viewBox="0 0 24 24"><path d="M5,20c-3-3-2-7 2-10l8-7c3-2 7,0 6,4l-8,10c-3,3-6,5-8,3z" fill="#cdcdcd" stroke="#c8c8c8" stroke-width="0.8"/></svg>
<svg style="left:371.5px;top:135.0px" width="24" height="24" viewBox="0 0 24 24"><path d="M2,3l6,12 6,-10h7" fill="none" stroke="#cdcdcd" stroke-width="1"/><circle cx="2" cy="3" r="1.5" fill="none" stroke="#bdbdbd"/><circle cx="14" cy="5" r="1.5" fill="none" stroke="#bdbdbd"/><rect x="13" y="13" width="9" height="9" fill="#dcdcdc" stroke="#ccc"/></svg>
<svg style="left:401.0px;top:135.0px" width="24" height="24" viewBox="0 0 24 24"><path d="M12,1v22M3,12h18" stroke="#cdcdcd" stroke-width="1"/><rect x="15" y="3" width="5" height="5" fill="none" stroke="#bdbdbd"/><rect x="4" y="16" width="5" height="5" fill="none" stroke="#bdbdbd"/><circle cx="12" cy="12" r="1.5" fill="#bdbdbd"/></svg>
<svg style="left:433.2px;top:135.0px" width="24" height="24" viewBox="0 0 24 24"><circle cx="7" cy="8" r="5.5" fill="#cdcdcd"/><circle cx="17" cy="8" r="5.5" fill="#cdcdcd"/><circle cx="8" cy="19" r="2.5" fill="none" stroke="#bdbdbd" stroke-width="1.3"/><circle cx="16" cy="19" r="2.5" fill="none" stroke="#bdbdbd" stroke-width="1.3"/><path d="M9,17l6-9M15,17l-6-9" stroke="#bdbdbd" stroke-width="1"/></svg>
<svg style="left:464.0px;top:135.0px" width="24" height="24" viewBox="0 0 24 24"><circle cx="7" cy="8" r="5.5" fill="#cdcdcd"/><circle cx="17" cy="8" r="5.5" fill="#cdcdcd"/><circle cx="8" cy="19" r="2.5" fill="none" stroke="#bdbdbd" stroke-width="1.3"/><circle cx="16" cy="19" r="2.5" fill="none" stroke="#bdbdbd" stroke-width="1.3"/><path d="M9,17l6-9M15,17l-6-9" stroke="#bdbdbd" stroke-width="1"/></svg>
<svg style="left:495.0px;top:135.0px" width="24" height="24" viewBox="0 0 24 24"><circle cx="7" cy="9" r="5.5" fill="#cdcdcd"/><circle cx="16" cy="9" r="5.5" fill="#cdcdcd"/><path d="M9,9h7" stroke="#e8e8e8" stroke-width="1.5"/><path d="M4,14c2,4 5,7 9,8" fill="none" stroke="#bdbdbd"/></svg>
<svg style="left:527.0px;top:135.0px" width="24" height="24" viewBox="0 0 24 24"><path d="M12,2v20" stroke="#bdbdbd" stroke-width="1"/><path d="M3,5h18M5,9h14M3,13h18M6,17h12M3,21h18" stroke="#cdcdcd" stroke-width="1.6"/></svg>
<svg style="left:556.7px;top:135.0px" width="24" height="24" viewBox="0 0 24 24"><path d="M9,20l3-17 8,6z" fill="#e0e0e0" stroke="#bdbdbd" stroke-width="0.8"/><path d="M4,14c0-5 3-9 7-10" fill="none" stroke="#bdbdbd" stroke-width="1"/><path d="M3,22h16" stroke="#bdbdbd"/></svg>
<svg style="left:76.4px;top:144px" width="10" height="6" viewBox="0 0 10 6"><path d="M0,0h10l-5,5.5z" fill="#666"/></svg>
<svg style="left:587px;top:144px" width="10" height="6" viewBox="0 0 10 6"><path d="M0,0h10l-5,5.5z" fill="#666"/></svg>
<svg style="left:14.0px;top:168.0px" width="24" height="24" viewBox="0 0 24 24"><rect x="1" y="2" width="21" height="20" fill="#d6ecc4"/><path d="M1,8c5-3 8,2 12,-1s6-3 9-1v7c-4,2-8,-1-12,2s-6,1-9,2z" fill="#b4dc98"/><circle cx="11" cy="11" r="3.5" fill="#b8d0dc" opacity="0.8"/><path d="M3,16c3-1 5,1 8,0" stroke="#a0c8a0" stroke-width="1" fill="none"/><path d="M11,18l3.5,3.5 8-8.5" fill="none" stroke="#5a8a2a" stroke-width="2.4"/></svg>
<svg style="left:45.0px;top:168.0px" width="24" height="24" viewBox="0 0 24 24"><rect x="1" y="3" width="6" height="6" fill="#3cb04a"/><path d="M2,12h10v10h-10z" fill="#f0b0a0"/><path d="M4,22c4-4 10-4 16-2l-3,3z" fill="#4a6ad0"/><path d="M10,16l10-14 2,1.5-10,14z" fill="#8a4a2a"/><rect x="6" y="12" width="8" height="7" fill="#f5e070"/></svg>
<div class="vs" style="left:76px;top:165px;height:31px"></div>
<div class="hd" style="left:81px;top:166px;height:28px"></div>
<svg style="left:91.0px;top:168.0px" width="24" height="24" viewBox="0 0 24 24"><path d="M12,2v8M9,5l3-3 3,3" fill="none" stroke="#111" stroke-width="1.8"/><rect x="4" y="12" width="16" height="10" rx="1" fill="#111"/><rect x="8" y="10.5" width="5" height="2" fill="#111"/><circle cx="12" cy="17" r="3" fill="#fff"/><circle cx="12" cy="17" r="1.6" fill="#111"/></svg>
<svg style="left:121.0px;top:168.0px" width="24" height="24" viewBox="0 0 24 24"><rect x="2" y="3" width="19" height="16" fill="#fff" stroke="#111" stroke-width="2" stroke-dasharray="3,1.5"/><path d="M4,16l5-6 4,4 3-3 4,5z" fill="#444"/><rect x="5" y="6" width="4" height="3" fill="#222"/><path d="M13,11v12l3-3 2,4 2-1-2-4h4z" fill="#fff" stroke="#222" stroke-width="0.9"/></svg>
<div class="hh" style="left:5px;top:202px;width:42px"></div>
<svg style="left:4.0px;top:211.3px" width="24" height="24" viewBox="0 0 24 24"><path d="M2.5,4l6,15 6.5-15h6" fill="none" stroke="#333" stroke-width="1.2"/><path d="M1,4l1.5-1.5 1.5,1.5-1.5,1.5zM13.5,4l1.5-1.5 1.5,1.5-1.5,1.5zM19.5,4l1.5-1.5 1.5,1.5-1.5,1.5z" fill="#fff" stroke="#333" stroke-width="0.7"/><circle cx="8.5" cy="19" r="1.5" fill="#fff" stroke="#333" stroke-width="0.8"/><rect x="14.5" y="14.5" width="8" height="8" rx="1" fill="#6e9c74" stroke="#557a5a" stroke-width="0.8"/><path d="M18.5,16.2v4.6M16.2,18.5h4.6" stroke="#fff" stroke-width="1.6"/></svg>
<svg style="left:5.0px;top:240.9px" width="24" height="24" viewBox="0 0 24 24"><rect x="1" y="2" width="6" height="6" fill="#1f3556"/><rect x="7" y="2" width="6" height="6" fill="#6d8fbf"/><rect x="13" y="2" width="6" height="6" fill="#1f3556"/><rect x="1" y="8" width="6" height="6" fill="#6d8fbf"/><rect x="7" y="8" width="6" height="6" fill="#1f3556"/><rect x="13" y="8" width="6" height="6" fill="#9db6d8"/><rect x="1" y="14" width="6" height="6" fill="#1f3556"/><rect x="7" y="14" width="6" height="6" fill="#9db6d8"/><rect x="14.5" y="14.5" width="8" height="8" rx="1" fill="#6e9c74" stroke="#557a5a" stroke-width="0.8"/><path d="M18.5,16.2v4.6M16.2,18.5h4.6" stroke="#fff" stroke-width="1.6"/></svg>
<svg style="left:5.0px;top:271.8px" width="24" height="24" viewBox="0 0 24 24"><rect x="1.5" y="2" width="19" height="18" fill="#6d8fbf" stroke="#2a4a70" stroke-width="1"/><path d="M1.5,11h19M11,2v18M1.5,2l9.5,9M11,2l-9.5,9" stroke="#1e3550" stroke-width="0.9"/><rect x="11" y="11" width="9.5" height="9" fill="#a9c0de"/><rect x="14.5" y="14.5" width="8" height="8" rx="1" fill="#6e9c74" stroke="#557a5a" stroke-width="0.8"/><path d="M18.5,16.2v4.6M16.2,18.5h4.6" stroke="#fff" stroke-width="1.6"/></svg>
<svg style="left:5.0px;top:302.6px" width="24" height="24" viewBox="0 0 24 24"><path d="M6,3c4,0 5,4 3,8-1,2-3,4-5,5 1.5-2 2-3 1.5-4-2,0-3-1.5-3-4 0-3 2-5 3.5-5z" fill="#3a5a8a"/><rect x="14.5" y="14.5" width="8" height="8" rx="1" fill="#6e9c74" stroke="#557a5a" stroke-width="0.8"/><path d="M18.5,16.2v4.6M16.2,18.5h4.6" stroke="#fff" stroke-width="1.6"/></svg>
<svg style="left:5.0px;top:332.2px" width="24" height="24" viewBox="0 0 24 24"><path d="M2,23c3-8 8-15 18-21 0,8-6,15-14,17z" fill="#7a9fd6" stroke="#3e5f95" stroke-width="0.8"/><path d="M3,22l14-17" stroke="#2e4f85" stroke-width="0.8"/><rect x="14.5" y="14.5" width="8" height="8" rx="1" fill="#6e9c74" stroke="#557a5a" stroke-width="0.8"/><path d="M18.5,16.2v4.6M16.2,18.5h4.6" stroke="#fff" stroke-width="1.6"/></svg>
<svg style="left:5.0px;top:363.0px" width="24" height="24" viewBox="0 0 24 24"><rect x="1.5" y="1.5" width="20" height="20" rx="2" fill="#a6bfdc" stroke="#5d7fa8" stroke-width="1"/><path d="M4,4l7,13 6,-13" fill="none" stroke="#333" stroke-width="1.1"/><circle cx="11" cy="17" r="1.4" fill="#fff" stroke="#333" stroke-width="0.7"/><rect x="14.5" y="14.5" width="8" height="8" rx="1" fill="#6e9c74" stroke="#557a5a" stroke-width="0.8"/><path d="M18.5,16.2v4.6M16.2,18.5h4.6" stroke="#fff" stroke-width="1.6"/></svg>
<svg style="left:4.0px;top:392.7px" width="24" height="24" viewBox="0 0 24 24"><path d="M3,4c0-3 4-3 6-2 2-1 6-1 8,1 3,2 2,7-1,8l-2,1v6c0,2-2,2-3,1l-1-4-3,1c-3,0-4-3-4-6z" fill="#4a6e9c" stroke="#22384f" stroke-width="1"/><rect x="14.5" y="14.5" width="8" height="8" rx="1" fill="#6e9c74" stroke="#557a5a" stroke-width="0.8"/><path d="M18.5,16.2v4.6M16.2,18.5h4.6" stroke="#fff" stroke-width="1.6"/></svg>
<svg style="left:4.0px;top:423.5px" width="24" height="24" viewBox="0 0 24 24"><circle cx="11.5" cy="11" r="9.5" fill="#8fb3dc" stroke="#4f77a8" stroke-width="1"/><path d="M2,11h19M11.5,1.5v19M4,6h15M4,16h15" stroke="#3d5f8e" stroke-width="0.8"/><ellipse cx="11.5" cy="11" rx="4.5" ry="9.5" fill="none" stroke="#3d5f8e" stroke-width="0.8"/><rect x="14.5" y="14.5" width="8" height="8" rx="1" fill="#6e9c74" stroke="#557a5a" stroke-width="0.8"/><path d="M18.5,16.2v4.6M16.2,18.5h4.6" stroke="#fff" stroke-width="1.6"/></svg>
<svg style="left:5.0px;top:452.4px" width="24" height="24" viewBox="0 0 24 24"><circle cx="11.5" cy="11" r="9.5" fill="#5a7ea8" stroke="#2a4060" stroke-width="1"/><path d="M2,11h19M4,6h15M4,16h15" stroke="#c9d8ea" stroke-width="1.5"/><rect x="14.5" y="14.5" width="8" height="8" rx="1" fill="#6e9c74" stroke="#557a5a" stroke-width="0.8"/><path d="M18.5,16.2v4.6M16.2,18.5h4.6" stroke="#fff" stroke-width="1.6"/></svg>
<svg style="left:4.0px;top:482.5px" width="24" height="24" viewBox="0 0 24 24"><circle cx="11.5" cy="11" r="9.5" fill="#8fb3dc" stroke="#4f77a8" stroke-width="1"/><path d="M2,11h19M11.5,1.5v19M4,6h15M4,16h15" stroke="#3d5f8e" stroke-width="0.8"/><ellipse cx="11.5" cy="11" rx="4.5" ry="9.5" fill="none" stroke="#3d5f8e" stroke-width="0.8"/><path d="M5,5l5,12 5-12" fill="none" stroke="#222" stroke-width="1.2"/><rect x="14.5" y="14.5" width="8" height="8" rx="1" fill="#6e9c74" stroke="#557a5a" stroke-width="0.8"/><path d="M18.5,16.2v4.6M16.2,18.5h4.6" stroke="#fff" stroke-width="1.6"/></svg>
<svg style="left:4.0px;top:512.7px" width="24" height="24" viewBox="0 0 24 24"><path d="M2.5,3.5l6,14 5.5,-14 6,0" fill="none" stroke="#333" stroke-width="1.2"/><path d="M1,3.5l1.5,-1.5 1.5,1.5-1.5,1.5zM12.5,3.5l1.5,-1.5 1.5,1.5-1.5,1.5zM18.5,3.5l1.5,-1.5 1.5,1.5-1.5,1.5z" fill="#fff" stroke="#333" stroke-width="0.7"/><circle cx="8.5" cy="17.5" r="1.5" fill="#fff" stroke="#333" stroke-width="0.8"/><rect x="14.5" y="14.5" width="8" height="8" rx="1" fill="#d4b22f" stroke="#b8961c" stroke-width="0.8"/><path d="M18.5,15.8v5.5M15.8,18.5h5.5M16.6,16.6l3.8,3.8M20.4,16.6l-3.8,3.8" stroke="#fff" stroke-width="1"/></svg>
<svg style="left:11.0px;top:542.8px" width="24" height="24" viewBox="0 0 24 24"><rect x="2" y="2" width="18" height="17" fill="#fff" stroke="#3a5a8a" stroke-width="1"/><rect x="2" y="2" width="18" height="4" fill="#3a5a8a"/><path d="M2,10h18M2,14h18M7,2v17M12,2v17M16,2v17" stroke="#3a5a8a" stroke-width="1.6"/><rect x="14.5" y="14.5" width="8" height="8" rx="1" fill="#6e9c74" stroke="#557a5a" stroke-width="0.8"/><path d="M18.5,16.2v4.6M16.2,18.5h4.6" stroke="#fff" stroke-width="1.6"/></svg>
<svg style="left:35px;top:402.7px" width="10" height="6" viewBox="0 0 10 6"><path d="M0,0h10l-5,5.5z" fill="#111"/></svg>
<svg style="left:35px;top:433.5px" width="10" height="6" viewBox="0 0 10 6"><path d="M0,0h10l-5,5.5z" fill="#111"/></svg>
<svg style="left:35px;top:492.5px" width="10" height="6" viewBox="0 0 10 6"><path d="M0,0h10l-5,5.5z" fill="#111"/></svg>
<svg style="left:35px;top:522.7px" width="10" height="6" viewBox="0 0 10 6"><path d="M0,0h10l-5,5.5z" fill="#111"/></svg>
<svg class="a" style="left:307px;top:198px;overflow:hidden" width="1129" height="797" viewBox="307 198 1129 797"><defs><pattern id="tr" x="0" y="0" width="112" height="96" patternUnits="userSpaceOnUse"><g transform="translate(5,4)"><path d="M3,8.5v4.5M9,8.5v4.5" stroke="#94b984" stroke-width="1"/><path d="M3,1l2.6,7.5h-5.2z" fill="none" stroke="#94b984" stroke-width="1"/><ellipse cx="9" cy="5" rx="2.5" ry="3.6" fill="none" stroke="#94b984" stroke-width="1"/></g><g transform="translate(58,16)"><path d="M3,8.5v4.5M9,8.5v4.5" stroke="#94b984" stroke-width="1"/><path d="M3,1l2.6,7.5h-5.2z" fill="none" stroke="#94b984" stroke-width="1"/><ellipse cx="9" cy="5" rx="2.5" ry="3.6" fill="none" stroke="#94b984" stroke-width="1"/></g><g transform="translate(30,40)"><path d="M3,8.5v4.5M9,8.5v4.5" stroke="#94b984" stroke-width="1"/><path d="M3,1l2.6,7.5h-5.2z" fill="none" stroke="#94b984" stroke-width="1"/><ellipse cx="9" cy="5" rx="2.5" ry="3.6" fill="none" stroke="#94b984" stroke-width="1"/></g><g transform="translate(86,48)"><path d="M3,8.5v4.5M9,8.5v4.5" stroke="#94b984" stroke-width="1"/><path d="M3,1l2.6,7.5h-5.2z" fill="none" stroke="#94b984" stroke-width="1"/><ellipse cx="9" cy="5" rx="2.5" ry="3.6" fill="none" stroke="#94b984" stroke-width="1"/></g><g transform="translate(10,70)"><path d="M3,8.5v4.5M9,8.5v4.5" stroke="#94b984" stroke-width="1"/><path d="M3,1l2.6,7.5h-5.2z" fill="none" stroke="#94b984" stroke-width="1"/><ellipse cx="9" cy="5" rx="2.5" ry="3.6" fill="none" stroke="#94b984" stroke-width="1"/></g><g transform="translate(62,78)"><path d="M3,8.5v4.5M9,8.5v4.5" stroke="#94b984" stroke-width="1"/><path d="M3,1l2.6,7.5h-5.2z" fill="none" stroke="#94b984" stroke-width="1"/><ellipse cx="9" cy="5" rx="2.5" ry="3.6" fill="none" stroke="#94b984" stroke-width="1"/></g><g transform="translate(36,10)"><path d="M3,8.5v4.5M9,8.5v4.5" stroke="#94b984" stroke-width="1"/><path d="M3,1l2.6,7.5h-5.2z" fill="none" stroke="#94b984" stroke-width="1"/><ellipse cx="9" cy="5" rx="2.5" ry="3.6" fill="none" stroke="#94b984" stroke-width="1"/></g></pattern></defs><rect x="307" y="198" width="1129" height="797" fill="#add19e"/><rect x="307" y="198" width="1129" height="797" fill="url(#tr)"/><polyline points="1190,198 1400,545 1440,590" fill="none" stroke="#c8dcbc" stroke-width="3"/><polyline points="1190,198 1400,545 1440,590" fill="none" stroke="#c08a4a" stroke-width="1.2" stroke-dasharray="4,3"/><polyline points="1277,355 1426,308" fill="none" stroke="#c8dcbc" stroke-width="3.5"/><polyline points="1277,355 1426,308" fill="none" stroke="#c08a4a" stroke-width="1.2" stroke-dasharray="2,3"/><polyline points="811,265 852,198" fill="none" stroke="#d6dcc4" stroke-width="4.5"/><polyline points="811,265 852,198" fill="none" stroke="#e4c0a8" stroke-width="1" stroke-dasharray="2,2"/><polygon points="307,198 657,198 673,205 890,307 1002,422 1040,484 1047,533 1042,597 376,862 307,900" fill="#c8f000" stroke="#2a2a2a" stroke-width="1.1"/><polygon points="552,805 1008,617 1156,945 1131,995 822,995 772,877.5 677.5,818.5 620,813" fill="#e60fe6" stroke="#2a2a2a" stroke-width="1.1"/><polygon points="1017,615 1141,572 1246,902 1239,995 1135,995 1159,945" fill="#ff8000" stroke="#2a2a2a" stroke-width="1.1"/><polygon points="307,909 376,871 524,807 620,815 676,820 770,879 820,995 307,995" fill="#f5e500" stroke="#2a2a2a" stroke-width="1.1"/><polygon points="333,942 393,929 373,995 315,995" fill="#8c5a9c" stroke="#3a3a3a" stroke-width="3.4"/><polygon points="333,942 393,929 373,995 315,995" fill="none" stroke="#b8bca8" stroke-width="1"/><polygon points="568,865 623,866 584.5,995 496,995 517.5,976" fill="#8c5a9c" stroke="#3a3a3a" stroke-width="3.4"/><polygon points="568,865 623,866 584.5,995 496,995 517.5,976" fill="none" stroke="#b8bca8" stroke-width="1"/><polygon points="729,904.5 765,951 734,995 665,995" fill="#8c5a9c" stroke="#3a3a3a" stroke-width="3.4"/><polygon points="729,904.5 765,951 734,995 665,995" fill="none" stroke="#b8bca8" stroke-width="1"/><text x="0" y="0" transform="translate(822,271) rotate(-55)" font-family="Liberation Sans" font-size="13.5" fill="#4a4a4a" stroke="#c8dcc0" stroke-width="1.5" paint-order="stroke">Waldmoor-Tor</text><polyline points="425,995 528,886 541,651 696,373 762,288 820,242 973,282 1337,450" fill="none" stroke="#000" stroke-width="4.5" stroke-linejoin="miter"/><polyline points="1197,198 1401,536 1440,570" fill="none" stroke="#000" stroke-width="8"/><polyline points="300,866 353,895 1151,581 1250,902 1245.5,1000" fill="none" stroke="#17701f" stroke-width="4"/><clipPath id="mg"><polygon points="552,805 1008,617 1156,945 1131,995 822,995 772,877.5 677.5,818.5 620,813"/></clipPath><polyline clip-path="url(#mg)" points="300,866 353,895 1151,581 1250,902 1245.5,1000" fill="none" stroke="#2a5e3a" stroke-width="4"/><circle cx="694" cy="360" r="6.5" fill="#f8f040" stroke="#111" stroke-width="1.2"/><circle cx="694" cy="360" r="1.8" fill="#111"/><circle cx="500" cy="632" r="6.5" fill="#f8f040" stroke="#111" stroke-width="1.2"/><circle cx="500" cy="632" r="1.8" fill="#111"/><circle cx="548" cy="677.5" r="6.5" fill="#f8f040" stroke="#111" stroke-width="1.2"/><circle cx="548" cy="677.5" r="1.8" fill="#111"/><circle cx="595" cy="536" r="6.5" fill="#f8f040" stroke="#111" stroke-width="1.2"/><circle cx="595" cy="536" r="1.8" fill="#111"/><circle cx="530" cy="764" r="6.5" fill="#f8f040" stroke="#111" stroke-width="1.2"/><circle cx="530" cy="764" r="1.8" fill="#111"/><circle cx="882" cy="240" r="7" fill="#fff" stroke="#000" stroke-width="1"/><circle cx="882" cy="240" r="2.6" fill="#000"/><circle cx="1092" cy="352" r="7" fill="#fff" stroke="#000" stroke-width="1"/><circle cx="1092" cy="352" r="2.6" fill="#000"/><circle cx="1176" cy="348" r="7" fill="#fff" stroke="#000" stroke-width="1"/><circle cx="1176" cy="348" r="2.6" fill="#000"/><circle cx="1278.5" cy="434.6" r="7" fill="#fff" stroke="#000" stroke-width="1"/><circle cx="1278.5" cy="434.6" r="2.6" fill="#000"/><circle cx="1299.6" cy="431.4" r="7" fill="#fff" stroke="#000" stroke-width="1"/><circle cx="1299.6" cy="431.4" r="2.6" fill="#000"/><circle cx="577" cy="870.5" r="7" fill="#fff" stroke="#000" stroke-width="1"/><circle cx="577" cy="870.5" r="2.6" fill="#000"/><circle cx="659.5" cy="853.8" r="7" fill="#fff" stroke="#000" stroke-width="1"/><circle cx="659.5" cy="853.8" r="2.6" fill="#000"/><text x="0" y="0" transform="translate(1208,740) rotate(72)" font-family="Liberation Sans" font-size="16.3" fill="#111">nsg_1937</text></svg>
<div class="t" style="left:694px;top:342.29px;font-size:16.2px;color:#111;font-weight:400;font-style:normal;">mis</div>
<div class="t" style="left:609.4px;top:482.89px;font-size:16.2px;color:#111;font-weight:400;font-style:normal;">mis</div>
<div class="t" style="left:569.3px;top:527.89px;font-size:16.2px;color:#111;font-weight:400;font-style:normal;">mis</div>
<div class="t" style="left:501.4px;top:613.69px;font-size:16.2px;color:#111;font-weight:400;font-style:normal;">mis</div>
<div class="t" style="left:548.8px;top:658.89px;font-size:16.2px;color:#111;font-weight:400;font-style:normal;">mis</div>
<div class="t" style="left:527px;top:766.29px;font-size:16.2px;color:#111;font-weight:400;font-style:normal;">mis</div>
<div class="t" style="left:447px;top:873.29px;font-size:16.2px;color:#111;font-weight:400;font-style:normal;">vph</div>
<div class="t" style="left:573.8px;top:873.79px;font-size:16.2px;color:#111;font-weight:400;font-style:normal;">vph</div>
<div class="t" style="left:660px;top:836.29px;font-size:16.2px;color:#111;font-weight:400;font-style:normal;">vph</div>
<div class="t" style="left:917px;top:812.29px;font-size:16.2px;color:#111;font-weight:400;font-style:normal;">vpm</div>
<div class="t" style="left:1145px;top:761.29px;font-size:16.2px;color:#111;font-weight:400;font-style:normal;">vab</div>
<div class="a" style="left:891px;top:916px;width:125px;height:45px;background:#ffff00;border:2px solid #000"></div>
<div class="t" style="left:925px;top:927.67px;font-size:20px;color:#000;font-weight:700;font-style:normal;">Bild 8</div>
<div class="a" style="left:307px;top:994.5px;width:1129px;height:1px;background:#555"></div>
<div class="a" style="left:50px;top:199px;width:251px;height:30px;background:#dadada;border:1px solid #c8c8c8"></div>
<div class="t" style="left:55.7px;top:208.58px;font-size:15.5px;color:#000;font-weight:400;font-style:normal;">Layer</div>
<svg style="left:254px;top:206px" width="18" height="17" viewBox="0 0 18 17"><rect x="5" y="1.5" width="11" height="9" fill="none" stroke="#111" stroke-width="2"/><rect x="1.5" y="6" width="10" height="9" fill="#dadada" stroke="#111" stroke-width="2"/></svg>
<svg style="left:280px;top:207px" width="16" height="16" viewBox="0 0 16 16"><path d="M1.5,1.5L14.5,14.5M14.5,1.5L1.5,14.5" stroke="#111" stroke-width="2.8"/></svg>
<svg style="left:53px;top:236px" width="18" height="18" viewBox="0 0 18 18"><path d="M2,12c2-4 6-6 10-5l-3,8c-3,1-6,0-7-3z" fill="#e05a3a"/><path d="M5,10c2-2 4-3 6-3" stroke="#f0b040" stroke-width="2"/><path d="M10,8l6-6" stroke="#e8b830" stroke-width="2.2"/></svg>
<svg style="left:76.5px;top:236px" width="18" height="18" viewBox="0 0 18 18"><rect x="3" y="5" width="9" height="10" fill="#f0f0f0" stroke="#888"/><rect x="6" y="2" width="7" height="10" fill="#f0f0f0" stroke="#888"/><circle cx="14" cy="14" r="3.2" fill="#6e9c74"/></svg>
<svg style="left:99px;top:236px" width="20" height="18" viewBox="0 0 20 18"><path d="M1,8c4-6 12-6 16,0-4,6-12,6-16,0z" fill="#dfe6ee" stroke="#6a7a8a"/><circle cx="9" cy="8" r="3" fill="#3a5a8a"/><path d="M12,12h7l-3.5,4z" fill="#111"/></svg>
<svg style="left:123px;top:236px" width="18" height="18" viewBox="0 0 18 18"><path d="M1,2h16l-6,7v8h-4v-8z" fill="#5aa0d0" stroke="#3a7aa8"/><rect x="1" y="1" width="16" height="2.5" fill="#e8d040"/></svg>
<svg style="left:146px;top:235px" width="18" height="18" viewBox="0 0 18 18"><text x="0" y="13" font-family="Liberation Serif" font-size="17" fill="#6a4a7a">ε</text><path d="M10,11h6l-1,6h-4z" fill="#c8c8c8" stroke="#999" stroke-width="0.6"/></svg>
<svg style="left:169.8px;top:242px" width="10" height="6" viewBox="0 0 10 6"><path d="M0,0h10l-5,5.5z" fill="#111"/></svg>
<svg style="left:184px;top:236px" width="18" height="18" viewBox="0 0 18 18"><rect x="2" y="3" width="7" height="13" fill="none" stroke="#aaa"/><rect x="3" y="5" width="3" height="2" fill="#e8c040"/><rect x="3" y="11" width="3" height="2" fill="#e8c040"/><path d="M12,2v10M8.5,9l3.5,5 3.5-5z" fill="#5a8ac8" stroke="#5a8ac8" stroke-width="2"/></svg>
<svg style="left:207px;top:236px" width="18" height="18" viewBox="0 0 18 18"><rect x="2" y="3" width="7" height="13" fill="none" stroke="#aaa"/><rect x="3" y="5" width="3" height="2" fill="#e8c040"/><rect x="3" y="11" width="3" height="2" fill="#e8c040"/><path d="M12,16v-10M8.5,7l3.5-5 3.5,5z" fill="#5a8ac8" stroke="#5a8ac8" stroke-width="2"/></svg>
<svg style="left:229px;top:236px" width="18" height="18" viewBox="0 0 18 18"><rect x="2" y="2" width="12" height="12" fill="#fff" stroke="#666"/><rect x="10" y="11" width="7" height="5" fill="#e04040"/><path d="M11.5,13.5h4" stroke="#fff"/></svg>
<div class="a" style="left:50px;top:229px;width:1px;height:30px;background:#a8a8a8"></div>
<div class="a" style="left:50px;top:258px;width:252px;height:737px;background:#fff;border:1px solid #828282"></div>
<div class="a" style="left:76px;top:259px;width:224px;height:24px;background:#dcdcdc"></div>
<div class="a" style="left:296px;top:283px;width:5px;height:432px;background:#e6e6e6"></div>
<div class="a" style="left:51px;top:259px;width:245px;height:735px;overflow:hidden"><div class="a" style="left:29px;top:4.5px;width:15px;height:15px;border:1px solid #333;background:#fff"></div><svg style="left:31px;top:7px" width="11" height="10" viewBox="0 0 11 10"><path d="M1,5l3,3.2 6-7" fill="none" stroke="#222" stroke-width="1.2"/></svg><svg style="left:51px;top:3px" width="18" height="18" viewBox="0 0 18 18"><circle cx="9" cy="9" r="7.8" fill="#d8e8f6" stroke="#2f5a8e" stroke-width="1.2"/><circle cx="9" cy="9" r="2.2" fill="#1f3a5e"/></svg><div class="t" style="left:76px;top:5.8px;font-size:14.5px;font-weight:700;font-style:normal;color:#000;text-decoration:underline;text-decoration-thickness:1.3px;text-underline-offset:1.5px;word-spacing:4px">Funde WT 2017 2019</div><svg style="left:7px;top:30px" width="8" height="12" viewBox="0 0 8 12"><path d="M1.5,1.5l4.5,4.5-4.5,4.5" fill="none" stroke="#8a8a8a" stroke-width="1.3"/></svg><div class="a" style="left:29px;top:28.5px;width:15px;height:15px;border:1px solid #333;background:#fff"></div><svg style="left:31px;top:31px" width="11" height="10" viewBox="0 0 11 10"><path d="M1,5l3,3.2 6-7" fill="none" stroke="#222" stroke-width="1.2"/></svg><svg style="left:51px;top:26px" width="18" height="20" viewBox="0 0 18 20"><path d="M1.5,8v10h10" fill="none" stroke="#bdbdbd" stroke-width="1"/><path d="M3.5,6v10h10" fill="none" stroke="#a8a8a8" stroke-width="1"/><rect x="5.5" y="4" width="10" height="10" fill="#fff" stroke="#8a8a8a" stroke-width="1"/><path d="M8.5,1.5v9h4v-9" fill="none" stroke="#7a7a7a" stroke-width="1"/><path d="M10.5,4v6" stroke="#7a7a7a" stroke-width="1"/></svg><div class="t" style="left:76px;top:29.8px;font-size:14.5px;font-weight:400;font-style:normal;color:#000;">Gebiet_und_Wege</div><svg style="left:7px;top:54px" width="8" height="12" viewBox="0 0 8 12"><path d="M1.5,1.5l4.5,4.5-4.5,4.5" fill="none" stroke="#8a8a8a" stroke-width="1.3"/></svg><div class="a" style="left:29px;top:52.5px;width:15px;height:15px;border:1px solid #333;background:#fff"></div><svg style="left:52px;top:52px" width="16" height="16" viewBox="0 0 16 16"><rect x="0" y="0" width="16" height="16" fill="#c9d6e8"/><rect x="0" y="0" width="5" height="5" fill="#1f3556"/><rect x="10" y="0" width="6" height="5" fill="#1f3556"/><rect x="5" y="5" width="5" height="5" fill="#1f3556"/><rect x="0" y="10" width="5" height="6" fill="#3a5a8a"/><rect x="5" y="0" width="5" height="5" fill="#7a9ac8"/><rect x="10" y="5" width="6" height="5" fill="#9db6d8"/><rect x="0" y="5" width="5" height="5" fill="#9db6d8"/></svg><div class="t" style="left:76px;top:53.8px;font-size:14.5px;font-weight:700;font-style:italic;color:#6e6e6e;">WMS LGRB-BW BK50: Bodenkarte</div><svg style="left:7px;top:78px" width="8" height="12" viewBox="0 0 8 12"><path d="M1.5,1.5l4.5,4.5-4.5,4.5" fill="none" stroke="#8a8a8a" stroke-width="1.3"/></svg><div class="a" style="left:29px;top:76.5px;width:15px;height:15px;border:1px solid #333;background:#fff"></div><svg style="left:52px;top:76px" width="16" height="16" viewBox="0 0 16 16"><rect x="0" y="0" width="16" height="16" fill="#c9d6e8"/><rect x="0" y="0" width="5" height="5" fill="#1f3556"/><rect x="10" y="0" width="6" height="5" fill="#1f3556"/><rect x="5" y="5" width="5" height="5" fill="#1f3556"/><rect x="0" y="10" width="5" height="6" fill="#3a5a8a"/><rect x="5" y="0" width="5" height="5" fill="#7a9ac8"/><rect x="10" y="5" width="6" height="5" fill="#9db6d8"/><rect x="0" y="5" width="5" height="5" fill="#9db6d8"/></svg><div class="t" style="left:76px;top:77.8px;font-size:14.5px;font-weight:700;font-style:italic;color:#6e6e6e;">WMS LGRB-BW GK50: Geologie</div><svg style="left:5px;top:104px" width="12" height="8" viewBox="0 0 12 8"><path d="M1.5,1.5l4.5,4.5 4.5-4.5" fill="none" stroke="#444" stroke-width="1.4"/></svg><div class="a" style="left:29px;top:100.5px;width:15px;height:15px;border:1px solid #333;background:#fff"></div><svg style="left:31px;top:103px" width="11" height="10" viewBox="0 0 11 10"><path d="M1,5l3,3.2 6-7" fill="none" stroke="#222" stroke-width="1.2"/></svg><svg style="left:51px;top:98px" width="18" height="20" viewBox="0 0 18 20"><path d="M1.5,8v10h10" fill="none" stroke="#bdbdbd" stroke-width="1"/><path d="M3.5,6v10h10" fill="none" stroke="#a8a8a8" stroke-width="1"/><rect x="5.5" y="4" width="10" height="10" fill="#fff" stroke="#8a8a8a" stroke-width="1"/><path d="M8.5,1.5v9h4v-9" fill="none" stroke="#7a7a7a" stroke-width="1"/><path d="M10.5,4v6" stroke="#7a7a7a" stroke-width="1"/></svg><div class="t" style="left:76px;top:101.8px;font-size:14.5px;font-weight:400;font-style:normal;color:#000;">Pflanzengesellschaften</div><svg style="left:32px;top:126px" width="8" height="12" viewBox="0 0 8 12"><path d="M1.5,1.5l4.5,4.5-4.5,4.5" fill="none" stroke="#8a8a8a" stroke-width="1.3"/></svg><div class="a" style="left:54px;top:124.5px;width:15px;height:15px;border:1px solid #333;background:#fff"></div><svg style="left:56px;top:127px" width="11" height="10" viewBox="0 0 11 10"><path d="M1,5l3,3.2 6-7" fill="none" stroke="#222" stroke-width="1.2"/></svg><svg style="left:76px;top:122px" width="18" height="20" viewBox="0 0 18 20"><path d="M1.5,8v10h10" fill="none" stroke="#bdbdbd" stroke-width="1"/><path d="M3.5,6v10h10" fill="none" stroke="#a8a8a8" stroke-width="1"/><rect x="5.5" y="4" width="10" height="10" fill="#fff" stroke="#8a8a8a" stroke-width="1"/><path d="M8.5,1.5v9h4v-9" fill="none" stroke="#7a7a7a" stroke-width="1"/><path d="M10.5,4v6" stroke="#7a7a7a" stroke-width="1"/></svg><div class="t" style="left:101px;top:125.8px;font-size:14.5px;font-weight:400;font-style:normal;color:#000;">Polytrichum_commune_</div><svg style="left:32px;top:150px" width="8" height="12" viewBox="0 0 8 12"><path d="M1.5,1.5l4.5,4.5-4.5,4.5" fill="none" stroke="#8a8a8a" stroke-width="1.3"/></svg><div class="a" style="left:54px;top:148.5px;width:15px;height:15px;border:1px solid #333;background:#fff"></div><svg style="left:56px;top:151px" width="11" height="10" viewBox="0 0 11 10"><path d="M1,5l3,3.2 6-7" fill="none" stroke="#222" stroke-width="1.2"/></svg><svg style="left:76px;top:146px" width="18" height="20" viewBox="0 0 18 20"><path d="M1.5,8v10h10" fill="none" stroke="#bdbdbd" stroke-width="1"/><path d="M3.5,6v10h10" fill="none" stroke="#a8a8a8" stroke-width="1"/><rect x="5.5" y="4" width="10" height="10" fill="#fff" stroke="#8a8a8a" stroke-width="1"/><path d="M8.5,1.5v9h4v-9" fill="none" stroke="#7a7a7a" stroke-width="1"/><path d="M10.5,4v6" stroke="#7a7a7a" stroke-width="1"/></svg><div class="t" style="left:101px;top:149.8px;font-size:14.5px;font-weight:400;font-style:normal;color:#000;">Sphagnetum_magellanici</div><svg style="left:32px;top:174px" width="8" height="12" viewBox="0 0 8 12"><path d="M1.5,1.5l4.5,4.5-4.5,4.5" fill="none" stroke="#8a8a8a" stroke-width="1.3"/></svg><div class="a" style="left:54px;top:172.5px;width:15px;height:15px;border:1px solid #333;background:#fff"></div><svg style="left:56px;top:175px" width="11" height="10" viewBox="0 0 11 10"><path d="M1,5l3,3.2 6-7" fill="none" stroke="#222" stroke-width="1.2"/></svg><svg style="left:76px;top:170px" width="18" height="20" viewBox="0 0 18 20"><path d="M1.5,8v10h10" fill="none" stroke="#bdbdbd" stroke-width="1"/><path d="M3.5,6v10h10" fill="none" stroke="#a8a8a8" stroke-width="1"/><rect x="5.5" y="4" width="10" height="10" fill="#fff" stroke="#8a8a8a" stroke-width="1"/><path d="M8.5,1.5v9h4v-9" fill="none" stroke="#7a7a7a" stroke-width="1"/><path d="M10.5,4v6" stroke="#7a7a7a" stroke-width="1"/></svg><div class="t" style="left:101px;top:173.8px;font-size:14.5px;font-weight:400;font-style:normal;color:#000;">Eriophorum_vaginatum</div><svg style="left:32px;top:198px" width="8" height="12" viewBox="0 0 8 12"><path d="M1.5,1.5l4.5,4.5-4.5,4.5" fill="none" stroke="#8a8a8a" stroke-width="1.3"/></svg><div class="a" style="left:54px;top:196.5px;width:15px;height:15px;border:1px solid #333;background:#fff"></div><svg style="left:56px;top:199px" width="11" height="10" viewBox="0 0 11 10"><path d="M1,5l3,3.2 6-7" fill="none" stroke="#222" stroke-width="1.2"/></svg><svg style="left:76px;top:194px" width="18" height="20" viewBox="0 0 18 20"><path d="M1.5,8v10h10" fill="none" stroke="#bdbdbd" stroke-width="1"/><path d="M3.5,6v10h10" fill="none" stroke="#a8a8a8" stroke-width="1"/><rect x="5.5" y="4" width="10" height="10" fill="#fff" stroke="#8a8a8a" stroke-width="1"/><path d="M8.5,1.5v9h4v-9" fill="none" stroke="#7a7a7a" stroke-width="1"/><path d="M10.5,4v6" stroke="#7a7a7a" stroke-width="1"/></svg><div class="t" style="left:101px;top:197.8px;font-size:14.5px;font-weight:400;font-style:normal;color:#000;">Eriophorum_vaginatum</div><svg style="left:32px;top:222px" width="8" height="12" viewBox="0 0 8 12"><path d="M1.5,1.5l4.5,4.5-4.5,4.5" fill="none" stroke="#8a8a8a" stroke-width="1.3"/></svg><div class="a" style="left:54px;top:220.5px;width:15px;height:15px;border:1px solid #333;background:#fff"></div><svg style="left:56px;top:223px" width="11" height="10" viewBox="0 0 11 10"><path d="M1,5l3,3.2 6-7" fill="none" stroke="#222" stroke-width="1.2"/></svg><svg style="left:76px;top:218px" width="18" height="20" viewBox="0 0 18 20"><path d="M1.5,8v10h10" fill="none" stroke="#bdbdbd" stroke-width="1"/><path d="M3.5,6v10h10" fill="none" stroke="#a8a8a8" stroke-width="1"/><rect x="5.5" y="4" width="10" height="10" fill="#fff" stroke="#8a8a8a" stroke-width="1"/><path d="M8.5,1.5v9h4v-9" fill="none" stroke="#7a7a7a" stroke-width="1"/><path d="M10.5,4v6" stroke="#7a7a7a" stroke-width="1"/></svg><div class="t" style="left:101px;top:221.8px;font-size:14.5px;font-weight:400;font-style:normal;color:#000;">Eriophorum_vaginatum</div><svg style="left:32px;top:246px" width="8" height="12" viewBox="0 0 8 12"><path d="M1.5,1.5l4.5,4.5-4.5,4.5" fill="none" stroke="#8a8a8a" stroke-width="1.3"/></svg><div class="a" style="left:54px;top:244.5px;width:15px;height:15px;border:1px solid #333;background:#fff"></div><svg style="left:56px;top:247px" width="11" height="10" viewBox="0 0 11 10"><path d="M1,5l3,3.2 6-7" fill="none" stroke="#222" stroke-width="1.2"/></svg><svg style="left:76px;top:242px" width="18" height="20" viewBox="0 0 18 20"><path d="M1.5,8v10h10" fill="none" stroke="#bdbdbd" stroke-width="1"/><path d="M3.5,6v10h10" fill="none" stroke="#a8a8a8" stroke-width="1"/><rect x="5.5" y="4" width="10" height="10" fill="#fff" stroke="#8a8a8a" stroke-width="1"/><path d="M8.5,1.5v9h4v-9" fill="none" stroke="#7a7a7a" stroke-width="1"/><path d="M10.5,4v6" stroke="#7a7a7a" stroke-width="1"/></svg><div class="t" style="left:101px;top:245.8px;font-size:14.5px;font-weight:400;font-style:normal;color:#000;">Vaccinio_Abietetum</div><svg style="left:32px;top:270px" width="8" height="12" viewBox="0 0 8 12"><path d="M1.5,1.5l4.5,4.5-4.5,4.5" fill="none" stroke="#8a8a8a" stroke-width="1.3"/></svg><div class="a" style="left:54px;top:268.5px;width:15px;height:15px;border:1px solid #333;background:#fff"></div><svg style="left:56px;top:271px" width="11" height="10" viewBox="0 0 11 10"><path d="M1,5l3,3.2 6-7" fill="none" stroke="#222" stroke-width="1.2"/></svg><svg style="left:76px;top:266px" width="18" height="20" viewBox="0 0 18 20"><path d="M1.5,8v10h10" fill="none" stroke="#bdbdbd" stroke-width="1"/><path d="M3.5,6v10h10" fill="none" stroke="#a8a8a8" stroke-width="1"/><rect x="5.5" y="4" width="10" height="10" fill="#fff" stroke="#8a8a8a" stroke-width="1"/><path d="M8.5,1.5v9h4v-9" fill="none" stroke="#7a7a7a" stroke-width="1"/><path d="M10.5,4v6" stroke="#7a7a7a" stroke-width="1"/></svg><div class="t" style="left:101px;top:269.8px;font-size:14.5px;font-weight:400;font-style:normal;color:#000;">Vaccinio_uliginosi_P_sy</div><svg style="left:32px;top:294px" width="8" height="12" viewBox="0 0 8 12"><path d="M1.5,1.5l4.5,4.5-4.5,4.5" fill="none" stroke="#8a8a8a" stroke-width="1.3"/></svg><div class="a" style="left:54px;top:292.5px;width:15px;height:15px;border:1px solid #333;background:#fff"></div><svg style="left:56px;top:295px" width="11" height="10" viewBox="0 0 11 10"><path d="M1,5l3,3.2 6-7" fill="none" stroke="#222" stroke-width="1.2"/></svg><svg style="left:76px;top:290px" width="18" height="20" viewBox="0 0 18 20"><path d="M1.5,8v10h10" fill="none" stroke="#bdbdbd" stroke-width="1"/><path d="M3.5,6v10h10" fill="none" stroke="#a8a8a8" stroke-width="1"/><rect x="5.5" y="4" width="10" height="10" fill="#fff" stroke="#8a8a8a" stroke-width="1"/><path d="M8.5,1.5v9h4v-9" fill="none" stroke="#7a7a7a" stroke-width="1"/><path d="M10.5,4v6" stroke="#7a7a7a" stroke-width="1"/></svg><div class="t" style="left:101px;top:293.8px;font-size:14.5px;font-weight:400;font-style:normal;color:#000;">Vaccinio_uliginosi_Pinetum</div><svg style="left:32px;top:318px" width="8" height="12" viewBox="0 0 8 12"><path d="M1.5,1.5l4.5,4.5-4.5,4.5" fill="none" stroke="#8a8a8a" stroke-width="1.3"/></svg><div class="a" style="left:54px;top:316.5px;width:15px;height:15px;border:1px solid #333;background:#fff"></div><svg style="left:56px;top:319px" width="11" height="10" viewBox="0 0 11 10"><path d="M1,5l3,3.2 6-7" fill="none" stroke="#222" stroke-width="1.2"/></svg><svg style="left:76px;top:314px" width="18" height="20" viewBox="0 0 18 20"><path d="M1.5,8v10h10" fill="none" stroke="#bdbdbd" stroke-width="1"/><path d="M3.5,6v10h10" fill="none" stroke="#a8a8a8" stroke-width="1"/><rect x="5.5" y="4" width="10" height="10" fill="#fff" stroke="#8a8a8a" stroke-width="1"/><path d="M8.5,1.5v9h4v-9" fill="none" stroke="#7a7a7a" stroke-width="1"/><path d="M10.5,4v6" stroke="#7a7a7a" stroke-width="1"/></svg><div class="t" style="left:101px;top:317.8px;font-size:14.5px;font-weight:400;font-style:normal;color:#000;">Vaccinio_uliginosi_Pinetum</div><svg style="left:32px;top:342px" width="8" height="12" viewBox="0 0 8 12"><path d="M1.5,1.5l4.5,4.5-4.5,4.5" fill="none" stroke="#8a8a8a" stroke-width="1.3"/></svg><div class="a" style="left:54px;top:340.5px;width:15px;height:15px;border:1px solid #333;background:#fff"></div><svg style="left:56px;top:343px" width="11" height="10" viewBox="0 0 11 10"><path d="M1,5l3,3.2 6-7" fill="none" stroke="#222" stroke-width="1.2"/></svg><svg style="left:76px;top:338px" width="18" height="20" viewBox="0 0 18 20"><path d="M1.5,8v10h10" fill="none" stroke="#bdbdbd" stroke-width="1"/><path d="M3.5,6v10h10" fill="none" stroke="#a8a8a8" stroke-width="1"/><rect x="5.5" y="4" width="10" height="10" fill="#fff" stroke="#8a8a8a" stroke-width="1"/><path d="M8.5,1.5v9h4v-9" fill="none" stroke="#7a7a7a" stroke-width="1"/><path d="M10.5,4v6" stroke="#7a7a7a" stroke-width="1"/></svg><div class="t" style="left:101px;top:341.8px;font-size:14.5px;font-weight:400;font-style:normal;color:#000;">Vaccinio_uliginosi_Pinetum</div><svg style="left:32px;top:366px" width="8" height="12" viewBox="0 0 8 12"><path d="M1.5,1.5l4.5,4.5-4.5,4.5" fill="none" stroke="#8a8a8a" stroke-width="1.3"/></svg><div class="a" style="left:54px;top:364.5px;width:15px;height:15px;border:1px solid #333;background:#fff"></div><svg style="left:56px;top:367px" width="11" height="10" viewBox="0 0 11 10"><path d="M1,5l3,3.2 6-7" fill="none" stroke="#222" stroke-width="1.2"/></svg><svg style="left:76px;top:362px" width="18" height="20" viewBox="0 0 18 20"><path d="M1.5,8v10h10" fill="none" stroke="#bdbdbd" stroke-width="1"/><path d="M3.5,6v10h10" fill="none" stroke="#a8a8a8" stroke-width="1"/><rect x="5.5" y="4" width="10" height="10" fill="#fff" stroke="#8a8a8a" stroke-width="1"/><path d="M8.5,1.5v9h4v-9" fill="none" stroke="#7a7a7a" stroke-width="1"/><path d="M10.5,4v6" stroke="#7a7a7a" stroke-width="1"/></svg><div class="t" style="left:101px;top:365.8px;font-size:14.5px;font-weight:400;font-style:normal;color:#000;">Vaccinio_uliginosi_Pinetum</div><svg style="left:32px;top:390px" width="8" height="12" viewBox="0 0 8 12"><path d="M1.5,1.5l4.5,4.5-4.5,4.5" fill="none" stroke="#8a8a8a" stroke-width="1.3"/></svg><div class="a" style="left:54px;top:388.5px;width:15px;height:15px;border:1px solid #333;background:#fff"></div><svg style="left:56px;top:391px" width="11" height="10" viewBox="0 0 11 10"><path d="M1,5l3,3.2 6-7" fill="none" stroke="#222" stroke-width="1.2"/></svg><svg style="left:76px;top:386px" width="18" height="20" viewBox="0 0 18 20"><path d="M1.5,8v10h10" fill="none" stroke="#bdbdbd" stroke-width="1"/><path d="M3.5,6v10h10" fill="none" stroke="#a8a8a8" stroke-width="1"/><rect x="5.5" y="4" width="10" height="10" fill="#fff" stroke="#8a8a8a" stroke-width="1"/><path d="M8.5,1.5v9h4v-9" fill="none" stroke="#7a7a7a" stroke-width="1"/><path d="M10.5,4v6" stroke="#7a7a7a" stroke-width="1"/></svg><div class="t" style="left:101px;top:389.8px;font-size:14.5px;font-weight:400;font-style:normal;color:#000;">Vaccinio_uliginosi_Pinetum</div><svg style="left:7px;top:414px" width="8" height="12" viewBox="0 0 8 12"><path d="M1.5,1.5l4.5,4.5-4.5,4.5" fill="none" stroke="#8a8a8a" stroke-width="1.3"/></svg><div class="a" style="left:29px;top:412.5px;width:15px;height:15px;border:1px solid #333;background:#fff"></div><svg style="left:31px;top:415px" width="11" height="10" viewBox="0 0 11 10"><path d="M1,5l3,3.2 6-7" fill="none" stroke="#222" stroke-width="1.2"/></svg><svg style="left:51px;top:410px" width="18" height="20" viewBox="0 0 18 20"><path d="M1.5,8v10h10" fill="none" stroke="#bdbdbd" stroke-width="1"/><path d="M3.5,6v10h10" fill="none" stroke="#a8a8a8" stroke-width="1"/><rect x="5.5" y="4" width="10" height="10" fill="#fff" stroke="#8a8a8a" stroke-width="1"/><path d="M8.5,1.5v9h4v-9" fill="none" stroke="#7a7a7a" stroke-width="1"/><path d="M10.5,4v6" stroke="#7a7a7a" stroke-width="1"/></svg><div class="t" style="left:76px;top:413.8px;font-size:14.5px;font-weight:400;font-style:normal;color:#000;">Biotope</div><svg style="left:5px;top:440px" width="12" height="8" viewBox="0 0 12 8"><path d="M1.5,1.5l4.5,4.5 4.5-4.5" fill="none" stroke="#444" stroke-width="1.4"/></svg><div class="a" style="left:29px;top:436.5px;width:15px;height:15px;border:1px solid #333;background:#fff"></div><svg style="left:31px;top:439px" width="11" height="10" viewBox="0 0 11 10"><path d="M1,5l3,3.2 6-7" fill="none" stroke="#222" stroke-width="1.2"/></svg><svg style="left:52px;top:436px" width="16" height="16" viewBox="0 0 16 16"><rect x="0" y="0" width="16" height="16" fill="#c9d6e8"/><rect x="0" y="0" width="5" height="5" fill="#1f3556"/><rect x="10" y="0" width="6" height="5" fill="#1f3556"/><rect x="5" y="5" width="5" height="5" fill="#1f3556"/><rect x="0" y="10" width="5" height="6" fill="#3a5a8a"/><rect x="5" y="0" width="5" height="5" fill="#7a9ac8"/><rect x="10" y="5" width="6" height="5" fill="#9db6d8"/><rect x="0" y="5" width="5" height="5" fill="#9db6d8"/></svg><div class="t" style="left:76px;top:437.8px;font-size:14.5px;font-weight:700;font-style:normal;color:#000;">OpenStreetMap Standard</div></div>
<div class="a" style="left:51px;top:975px;width:250px;height:19px;background:#f0f0f0"></div>
<div class="a" style="left:72px;top:976px;width:102px;height:17px;background:#cdcdcd"></div>
<svg style="left:57px;top:979px" width="10" height="12" viewBox="0 0 10 12"><path d="M7,1.5l-4.5,4.5 4.5,4.5" fill="none" stroke="#555" stroke-width="1.6"/></svg>
<svg style="left:285px;top:979px" width="10" height="12" viewBox="0 0 10 12"><path d="M3,1.5l4.5,4.5-4.5,4.5" fill="none" stroke="#555" stroke-width="1.6"/></svg>
<div class="a" style="left:0;top:995px;width:1438px;height:1px;background:#d0d0d0"></div>
<div class="a" style="left:4px;top:1001px;width:279px;height:22px;background:#fff;border:1px solid #7a7a7a"></div>
<svg style="left:12px;top:1005px" width="14" height="14" viewBox="0 0 14 14"><circle cx="5.5" cy="5.5" r="4.2" fill="none" stroke="#777" stroke-width="1.3"/><path d="M8.5,8.5l4,4" stroke="#777" stroke-width="1.5"/></svg>
<div class="t" style="left:33px;top:1007.00px;font-size:13px;color:#6d6d6d;font-weight:400;font-style:normal;">Zu suchender Typ (Strg+K)</div>
<div class="a" style="left:291px;top:1003px;width:121px;height:20px;overflow:hidden"><div class="t" style="left:0;top:1.5px;font-size:13px">7 Objekte auf dem Layer</div></div>
<div class="t" style="left:421.6px;top:1007.33px;font-size:12.6px;color:#000;font-weight:400;font-style:normal;">Koordinate</div>
<div class="a" style="left:485.5px;top:1002px;width:132px;height:21px;background:#fff;border:1px solid #7a7a7a"></div>
<div class="t" style="left:492.5px;top:1007.16px;font-size:12.8px;color:#000;font-weight:400;font-style:normal;">473853.3,5397751.0</div>
<svg style="left:621px;top:1002px" width="20" height="22" viewBox="0 0 20 22"><path d="M6,4c3-2 7-1 8,3l1,6c0,4-3,6-6,5-3-1-5-4-5-7z" fill="#ddd" stroke="#222" stroke-width="1.4"/><path d="M8,5l2,5" stroke="#222" stroke-width="1.2"/><circle cx="10" cy="15" r="2.5" fill="#fff" stroke="#222"/><path d="M2,10h3M16,4l2-2M17,8h2" stroke="#333"/></svg>
<div class="t" style="left:654.5px;top:1007.16px;font-size:12.8px;color:#000;font-weight:400;font-style:normal;">Maßstab</div>
<div class="a" style="left:705.5px;top:1001px;width:90px;height:22px;background:#fff;border:1px solid #7a7a7a"></div>
<div class="t" style="left:710px;top:1007.16px;font-size:12.8px;color:#000;font-weight:400;font-style:normal;">1:1519</div>
<svg style="left:778px;top:1009px" width="12" height="8" viewBox="0 0 12 8"><path d="M1,1.5l5,5 5-5" fill="none" stroke="#444" stroke-width="1.1"/></svg>
<svg style="left:806px;top:1003px" width="17" height="20" viewBox="0 0 17 20"><path d="M4,9v-3c0-4 9-4 9,0v3" fill="none" stroke="#777" stroke-width="2"/><rect x="1.5" y="9" width="14" height="10" rx="1" fill="#777"/></svg>
<div class="t" style="left:832px;top:1007.16px;font-size:12.8px;color:#000;font-weight:400;font-style:normal;">Vergrößerung</div>
<div class="a" style="left:914.5px;top:1002px;width:86px;height:21px;background:#fff;border:1px solid #7a7a7a"></div>
<div class="t" style="left:918px;top:1007.16px;font-size:12.8px;color:#000;font-weight:400;font-style:normal;">100%</div>
<div class="a" style="left:985px;top:1003.5px;width:14px;height:18px;background:#f0f0f0;border:1px solid #adadad"></div>
<svg style="left:987px;top:1005px" width="10" height="15" viewBox="0 0 10 15"><path d="M1,5.5l4-4 4,4z" fill="#111"/><path d="M1,9.5l4,4 4-4z" fill="#111"/><path d="M0,7.5h10" stroke="#adadad"/></svg>
<div class="t" style="left:1010.7px;top:1007.16px;font-size:12.8px;color:#000;font-weight:400;font-style:normal;">Drehung</div>
<div class="a" style="left:1067px;top:1002px;width:84.5px;height:21px;background:#fff;border:1px solid #7a7a7a"></div>
<div class="t" style="left:1070.7px;top:1007.16px;font-size:12.8px;color:#000;font-weight:400;font-style:normal;">0,0 °</div>
<div class="a" style="left:1134.6px;top:1003.5px;width:14px;height:18px;background:#f0f0f0;border:1px solid #adadad"></div>
<svg style="left:1136.6px;top:1005px" width="10" height="15" viewBox="0 0 10 15"><path d="M1,5.5l4-4 4,4z" fill="#111"/><path d="M1,9.5l4,4 4-4z" fill="#111"/><path d="M0,7.5h10" stroke="#adadad"/></svg>
<div class="a" style="left:1158.5px;top:1003.5px;width:15.5px;height:16px;background:#fff;border:1px solid #333"></div>
<svg style="left:1160px;top:1006px" width="12" height="11" viewBox="0 0 12 11"><path d="M1,5.5l3.2,3.5 6.5-8" fill="none" stroke="#222" stroke-width="1.2"/></svg>
<div class="t" style="left:1179.7px;top:1007.16px;font-size:12.8px;color:#000;font-weight:400;font-style:normal;">Zeichnen</div>
<svg style="left:1249px;top:1004px" width="18" height="18" viewBox="0 0 18 18"><circle cx="9" cy="9" r="7.5" fill="none" stroke="#666" stroke-width="1.2"/><ellipse cx="9" cy="9" rx="3.5" ry="7.5" fill="none" stroke="#666" stroke-width="1"/><path d="M1.5,9h15M3,5h12M3,13h12" stroke="#666" stroke-width="1"/></svg>
<div class="t" style="left:1272px;top:1007.59px;font-size:12.3px;color:#000;font-weight:400;font-style:normal;">EPSG:25832</div>
<svg style="left:1359px;top:1002px" width="22" height="22" viewBox="0 0 22 22"><path d="M11,2c5.5,0 10,3.5 10,8s-4.5,8-10,8c-1,0-2,0-3-0.3l-4,3.3 0.5-4.5c-2.5-1.5-4-4-4-6.5 0-4.5 4.5-8 10.5-8z" fill="#555"/><circle cx="6.5" cy="10" r="1.5" fill="#fff"/><circle cx="11" cy="10" r="1.5" fill="#fff"/><circle cx="15.5" cy="10" r="1.5" fill="#fff"/></svg>
<svg style="left:1392px;top:1002px" width="24" height="22" viewBox="0 0 24 22"><path d="M2,6h4c0-3 4-3 4,0h4v4c3,0 3,4 0,4v5h-12v-4c2,0 2-4 0-4z" fill="#aaa" stroke="#444" stroke-width="1.2"/><path d="M2,6l12,13" stroke="#444" stroke-width="1"/><path d="M15,8c2-6 8-5 7,0s-5,4-8,2" fill="none" stroke="#444" stroke-width="1.2"/></svg>
<svg style="left:1422px;top:1014px" width="10" height="10" viewBox="0 0 10 10"><rect x="7" y="1" width="2" height="2" fill="#bbb"/><rect x="4" y="4" width="2" height="2" fill="#bbb"/><rect x="7" y="4" width="2" height="2" fill="#bbb"/><rect x="1" y="7" width="2" height="2" fill="#bbb"/><rect x="4" y="7" width="2" height="2" fill="#bbb"/><rect x="7" y="7" width="2" height="2" fill="#bbb"/></svg>
<div class="a" style="left:0;top:0;width:1438px;height:1030px;border-style:solid;border-color:#9c1a2a;border-width:1px 2px 3px 1.5px"></div></body></html>
